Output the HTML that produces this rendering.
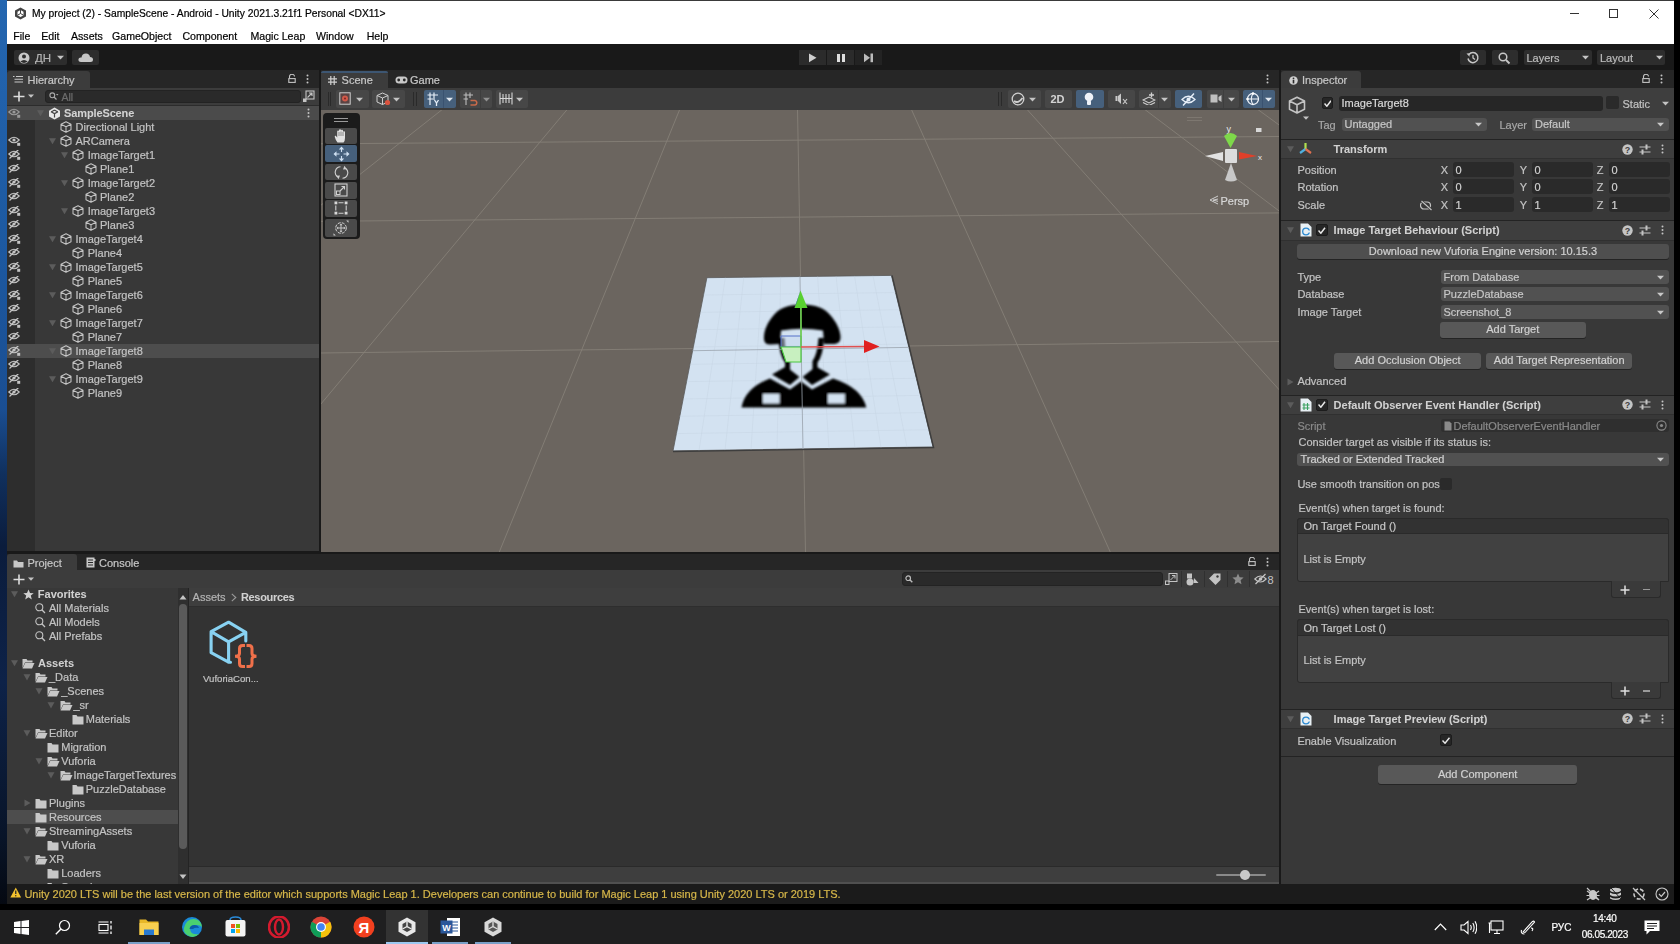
<!DOCTYPE html><html><head><meta charset="utf-8"><style>
*{margin:0;padding:0;box-sizing:border-box}
html,body{width:1680px;height:944px;overflow:hidden;background:#000}
body{position:relative;font-family:"Liberation Sans",sans-serif}
.a{position:absolute}
.t{position:absolute;white-space:nowrap;line-height:1;opacity:0.995;-webkit-text-stroke:0.2px currentColor}
</style></head><body>
<div class="a" style="left:0;top:0;width:7px;height:910px;background:linear-gradient(180deg,#2466b0 0%,#1d5aa2 25%,#1a4e92 45%,#10305e 52%,#0b1c3c 60%,#0d2248 75%,#081428 92%,#05080f 100%)"></div>
<div class="a" style="left:1674px;top:0px;width:6px;height:944px;background:#000;"></div>
<div class="a" style="left:7px;top:0px;width:1667px;height:44px;background:#ffffff;"></div>
<div class="a" style="left:7px;top:0px;width:1667px;height:1px;background:#3a3a3a;"></div>
<svg class="a" style="left:14px;top:7px;" width="13" height="13" viewBox="0 0 13 13"><path d="M6.5 0.5 L12 3.5 L12 9.5 L6.5 12.5 L1 9.5 L1 3.5 Z" fill="#444"/><path d="M6.5 3 L9.5 4.8 L9.5 8.2 L6.5 10 L3.5 8.2 L3.5 4.8 Z" fill="#fff"/><path d="M6.5 3 L6.5 6.5 L9.5 8.2 M6.5 6.5 L3.5 8.2" stroke="#444" stroke-width="1" fill="none"/></svg>
<div class="t" style="left:32px;top:6.5px;height:14px;line-height:14px;font-size:10.3px;color:#000;">My project (2) - SampleScene - Android - Unity 2021.3.21f1 Personal &lt;DX11&gt;</div>
<div class="a" style="left:1569.5px;top:12.5px;width:9.5px;height:1px;background:#333;"></div>
<div class="a" style="left:1608.5px;top:8.5px;width:9.5px;height:9.5px;border:1px solid #333"></div>
<svg class="a" style="left:1648.5px;top:8.5px;" width="10" height="10" viewBox="0 0 10 10"><path d="M0.5 0.5 L9.5 9.5 M9.5 0.5 L0.5 9.5" stroke="#333" stroke-width="1"/></svg>
<div class="t" style="left:13.3px;top:28.5px;height:14px;line-height:14px;font-size:10.6px;color:#000;">File</div>
<div class="t" style="left:41.2px;top:28.5px;height:14px;line-height:14px;font-size:10.6px;color:#000;">Edit</div>
<div class="t" style="left:71px;top:28.5px;height:14px;line-height:14px;font-size:10.6px;color:#000;">Assets</div>
<div class="t" style="left:112px;top:28.5px;height:14px;line-height:14px;font-size:10.6px;color:#000;">GameObject</div>
<div class="t" style="left:182.4px;top:28.5px;height:14px;line-height:14px;font-size:10.6px;color:#000;">Component</div>
<div class="t" style="left:250.5px;top:28.5px;height:14px;line-height:14px;font-size:10.6px;color:#000;">Magic Leap</div>
<div class="t" style="left:316px;top:28.5px;height:14px;line-height:14px;font-size:10.6px;color:#000;">Window</div>
<div class="t" style="left:366.7px;top:28.5px;height:14px;line-height:14px;font-size:10.6px;color:#000;">Help</div>
<div class="a" style="left:7px;top:44px;width:1667px;height:26px;background:#191919;"></div>
<div class="a" style="left:14px;top:50px;width:53px;height:15px;background:#2d2d2d;border-radius:2px"></div>
<svg class="a" style="left:18px;top:51.5px;" width="12" height="12" viewBox="0 0 12 12"><circle cx="6" cy="6" r="5.5" fill="#c8c8c8"/><circle cx="6" cy="4.6" r="2" fill="#2d2d2d"/><path d="M2.3 9.6 Q6 6.2 9.7 9.6 Q6 12.2 2.3 9.6Z" fill="#2d2d2d"/></svg>
<div class="t" style="left:35px;top:50.5px;height:14px;line-height:14px;font-size:11.5px;color:#b4b4b4;">ДН</div>
<svg class="a" style="left:55.5px;top:54.0px;" width="9.0" height="7.0" viewBox="0 0 9.0 7.0"><path d="M1 1.75 L8.0 1.75 L4.5 5.6000000000000005 Z" fill="#c4c4c4"/></svg>
<div class="a" style="left:72px;top:50px;width:27px;height:15px;background:#2d2d2d;border-radius:2px"></div>
<svg class="a" style="left:78px;top:52px;" width="16" height="11" viewBox="0 0 16 11"><path d="M3 10 Q0 10 0.5 7 Q1 5 3.5 5.5 Q4 1.5 8 1.5 Q11.5 1.5 12 5 Q15 5 15 7.5 Q15 10 12.5 10 Z" fill="#c8c8c8"/></svg>
<div class="a" style="left:799px;top:50px;width:27px;height:15px;background:#2b2b2b;"></div>
<div class="a" style="left:827px;top:50px;width:27px;height:15px;background:#2b2b2b;"></div>
<div class="a" style="left:855px;top:50px;width:27px;height:15px;background:#232323;"></div>
<svg class="a" style="left:809px;top:53px;" width="8" height="10" viewBox="0 0 8 10"><path d="M0 0.5 L7.5 4.8 L0 9.2Z" fill="#d0d0d0"/></svg>
<div class="a" style="left:837px;top:53.5px;width:3px;height:8.5px;background:#e0e0e0;"></div>
<div class="a" style="left:842px;top:53.5px;width:3px;height:8.5px;background:#e0e0e0;"></div>
<svg class="a" style="left:864px;top:53px;" width="10" height="10" viewBox="0 0 10 10"><path d="M0 0.5 L6 4.8 L0 9.2Z" fill="#bcbcbc"/><rect x="6.5" y="0.5" width="2.5" height="8.7" fill="#bcbcbc"/></svg>
<div class="a" style="left:1460px;top:50px;width:26px;height:15px;background:#2d2d2d;border-radius:2px"></div>
<svg class="a" style="left:1466px;top:51px;" width="14" height="13" viewBox="0 0 14 13"><path d="M3 3.5 A5 5 0 1 1 2 7.5" stroke="#c8c8c8" stroke-width="1.5" fill="none"/><path d="M0.5 2.5 L3.8 2.2 L3.5 5.8Z" fill="#c8c8c8"/><path d="M7 4 L7 7 L9 8.5" stroke="#c8c8c8" stroke-width="1.3" fill="none"/></svg>
<div class="a" style="left:1492px;top:50px;width:26px;height:15px;background:#2d2d2d;border-radius:2px"></div>
<svg class="a" style="left:1498px;top:51.5px;" width="14" height="13" viewBox="0 0 14 13"><circle cx="5" cy="5" r="3.8" stroke="#c8c8c8" stroke-width="1.5" fill="none"/><path d="M8 8 L11.5 11.5" stroke="#c8c8c8" stroke-width="1.8"/></svg>
<div class="a" style="left:1523.5px;top:50px;width:68px;height:15px;background:#2d2d2d;border-radius:2px"></div>
<div class="t" style="left:1526.4px;top:50.5px;height:14px;line-height:14px;font-size:11px;color:#bdbdbd;">Layers</div>
<svg class="a" style="left:1580.5px;top:54.0px;" width="9.0" height="7.0" viewBox="0 0 9.0 7.0"><path d="M1 1.75 L8.0 1.75 L4.5 5.6000000000000005 Z" fill="#c4c4c4"/></svg>
<div class="a" style="left:1597px;top:50px;width:68px;height:15px;background:#2d2d2d;border-radius:2px"></div>
<div class="t" style="left:1600px;top:50.5px;height:14px;line-height:14px;font-size:11px;color:#bdbdbd;">Layout</div>
<svg class="a" style="left:1654.5px;top:54.0px;" width="9.0" height="7.0" viewBox="0 0 9.0 7.0"><path d="M1 1.75 L8.0 1.75 L4.5 5.6000000000000005 Z" fill="#c4c4c4"/></svg>
<div class="a" style="left:7px;top:70px;width:311.5px;height:481.5px;background:#383838;"></div>
<div class="a" style="left:7px;top:70px;width:311.5px;height:18px;background:#262626;"></div>
<div class="a" style="left:7px;top:71px;width:83px;height:17px;background:#3c3c3c;border-radius:3px 3px 0 0"></div>
<div class="a" style="left:7px;top:88px;width:311.5px;height:17.5px;background:#3c3c3c;"></div>
<div class="a" style="left:7px;top:105.5px;width:311.5px;height:1px;background:#232323;"></div>
<div class="a" style="left:7px;top:106.5px;width:28px;height:445px;background:#2d2d2d;"></div>
<div class="a" style="left:318.5px;top:70px;width:2px;height:813.6px;background:#191919;"></div>
<div class="a" style="left:1279.3px;top:70px;width:1.5px;height:813.6px;background:#191919;"></div>
<div class="a" style="left:7px;top:551.4px;width:1272.3px;height:3px;background:#191919;"></div>
<div class="a" style="left:320.5px;top:70px;width:958.8px;height:18px;background:#262626;"></div>
<div class="a" style="left:320.5px;top:71px;width:67.5px;height:17px;background:#3c3c3c;border-radius:3px 3px 0 0"></div>
<div class="a" style="left:320.5px;top:88px;width:958.8px;height:21.5px;background:#3c3c3c;"></div>
<div class="a" style="left:320.5px;top:109.5px;width:958.8px;height:442px;background:#6b655f;"></div>
<div class="a" style="left:1280.8px;top:70px;width:393.2px;height:813.6px;background:#383838;"></div>
<div class="a" style="left:1280.8px;top:70px;width:393.2px;height:18px;background:#262626;"></div>
<div class="a" style="left:1281px;top:71px;width:80px;height:17px;background:#3c3c3c;border-radius:3px 3px 0 0"></div>
<div class="a" style="left:7px;top:554.4px;width:1272.3px;height:329.2px;background:#333333;"></div>
<div class="a" style="left:7px;top:554.4px;width:1272.3px;height:16px;background:#262626;"></div>
<div class="a" style="left:7px;top:554.4px;width:70px;height:16px;background:#3c3c3c;border-radius:3px 3px 0 0"></div>
<div class="a" style="left:7px;top:570.4px;width:1272.3px;height:17.6px;background:#3c3c3c;"></div>
<div class="a" style="left:7px;top:883.6px;width:1667px;height:20.4px;background:#1b1b1b;"></div>
<div class="a" style="left:0px;top:904px;width:1680px;height:6px;background:#000;"></div>
<div class="a" style="left:0px;top:910px;width:1680px;height:34px;background:#1f1f20;"></div>
<svg class="a" style="left:13px;top:76px;" width="10" height="7" viewBox="0 0 10 7"><path d="M0 0.5 H1.5 M3 0.5 H10 M1.5 3.2 H10 M1.5 6 H10" stroke="#c8c8c8" stroke-width="1.1"/></svg>
<div class="t" style="left:27.5px;top:73.2px;height:14px;line-height:14px;font-size:11px;color:#c8c8c8;">Hierarchy</div>
<svg class="a" style="left:288px;top:74px;" width="8" height="9" viewBox="0 0 8 9"><path d="M1.5 4 V2.5 A2.5 2.2 0 0 1 6.5 2.5" stroke="#c4c4c4" stroke-width="1.1" fill="none"/><rect x="0.8" y="4.6" width="6.4" height="3.8" stroke="#c4c4c4" stroke-width="1.1" fill="none"/></svg>
<svg class="a" style="left:305.5px;top:74px;" width="3" height="10" viewBox="0 0 3 10"><circle cx="1.5" cy="1.5" r="1" fill="#c4c4c4"/><circle cx="1.5" cy="5" r="1" fill="#c4c4c4"/><circle cx="1.5" cy="8.5" r="1" fill="#c4c4c4"/></svg>
<svg class="a" style="left:13px;top:91px;" width="12" height="11" viewBox="0 0 12 11"><path d="M6 0.5 V10.5 M0.5 5.5 H11.5" stroke="#dcdcdc" stroke-width="1.6"/></svg>
<svg class="a" style="left:26.5px;top:93px;" width="8" height="6" viewBox="0 0 8 6"><path d="M1 1.5 L7 1.5 L4 4.800000000000001 Z" fill="#c4c4c4"/></svg>
<div class="a" style="left:45px;top:89.5px;width:256px;height:13.5px;background:#2a2a2a;border-radius:3px;border:1px solid #232323"></div>
<svg class="a" style="left:49px;top:92px;" width="10" height="9" viewBox="0 0 10 9"><circle cx="3.3" cy="3.3" r="2.4" stroke="#aaa" stroke-width="1.1" fill="none"/><path d="M5 5 L7.5 7.5" stroke="#aaa" stroke-width="1.3"/><path d="M7 2 L9.5 2 L8.25 3.5Z" fill="#aaa"/></svg>
<div class="t" style="left:61.5px;top:89.5px;height:14px;line-height:14px;font-size:10.5px;color:#6e6e6e;">All</div>
<svg class="a" style="left:302px;top:90px;" width="13" height="13" viewBox="0 0 13 13"><rect x="4" y="1" width="8" height="8" stroke="#c4c4c4" stroke-width="1.1" fill="none"/><path d="M5.5 7.5 L10 3 M7 3 H10 V6" stroke="#c4c4c4" stroke-width="1.1" fill="none"/><rect x="1" y="8.5" width="3.5" height="3.5" fill="#c4c4c4"/></svg>
<div class="a" style="left:7px;top:105.5px;width:311.5px;height:14px;background:#4b4b4b;"></div>
<div class="a" style="left:7px;top:104.5px;width:311.5px;height:1.2px;background:#2c2c2c;"></div>
<svg class="a" style="left:8px;top:108px;" width="13" height="10" viewBox="0 0 13 10"><path d="M0.8 4 Q6 -1.5 11.2 4 Q6 9.5 0.8 4Z" stroke="#9a9a9a" stroke-width="1.1" fill="none"/><circle cx="6" cy="4" r="1.6" fill="#9a9a9a"/><rect x="9.2" y="6.8" width="3" height="3" fill="#9a9a9a"/></svg>
<svg class="a" style="left:37.0px;top:109.6px;" width="7" height="6.5" viewBox="0 0 7 6.5"><path d="M0 0.2 H7 L3.5 6.3Z" fill="#5c5c5c"/></svg>
<svg class="a" style="left:48px;top:106.5px;" width="13" height="13" viewBox="0 0 13 13"><path d="M6.5 0.6 L12 3.7 L12 9.5 L6.5 12.5 L1 9.5 L1 3.7Z" fill="#e8e8e8"/><path d="M6.5 3 L9.8 5 M6.5 3 L3.2 5 M6.5 6.6 L6.5 10.5 M6.5 6.6 L3 4.8 M6.5 6.6 L10 4.8" stroke="#464646" stroke-width="1.2"/></svg>
<div class="t" style="left:64px;top:105.5px;height:14px;line-height:14px;font-size:11px;color:#d4d4d4;font-weight:bold;-webkit-text-stroke:0.05px currentColor;letter-spacing:-0.12px">SampleScene</div>
<svg class="a" style="left:306.7px;top:107.8px;" width="3" height="10" viewBox="0 0 3 10"><circle cx="1.5" cy="1.5" r="1" fill="#c4c4c4"/><circle cx="1.5" cy="5" r="1" fill="#c4c4c4"/><circle cx="1.5" cy="8.5" r="1" fill="#c4c4c4"/></svg>
<svg class="a" style="left:60.0px;top:120.5px;" width="12" height="12" viewBox="0 0 12 12"><g transform="scale(1.0)"><path d="M6 0.8 L11 3.3 L11 8.8 L6 11.3 L1 8.8 L1 3.3 Z M1 3.3 L6 5.8 L11 3.3 M6 5.8 V11.3" stroke="#c4c4c4" stroke-width="1.05" fill="none" stroke-linejoin="round"/></g></svg>
<div class="t" style="left:75.5px;top:119.5px;height:14px;line-height:14px;font-size:11px;color:#c4c4c4;">Directional Light</div>
<svg class="a" style="left:8px;top:136.0px;" width="13" height="10" viewBox="0 0 13 10"><path d="M0.8 4 Q6 -1.5 11.2 4 Q6 9.5 0.8 4Z" stroke="#c4c4c4" stroke-width="1.1" fill="none"/><circle cx="6" cy="4" r="1.6" fill="#c4c4c4"/><rect x="9.2" y="6.8" width="3" height="3" fill="#c4c4c4"/></svg>
<svg class="a" style="left:49.0px;top:137.60000000000002px;" width="7" height="6.5" viewBox="0 0 7 6.5"><path d="M0 0.2 H7 L3.5 6.3Z" fill="#5c5c5c"/></svg>
<svg class="a" style="left:60.0px;top:134.5px;" width="12" height="12" viewBox="0 0 12 12"><g transform="scale(1.0)"><path d="M6 0.8 L11 3.3 L11 8.8 L6 11.3 L1 8.8 L1 3.3 Z M1 3.3 L6 5.8 L11 3.3 M6 5.8 V11.3" stroke="#c4c4c4" stroke-width="1.05" fill="none" stroke-linejoin="round"/></g></svg>
<div class="t" style="left:75.5px;top:133.5px;height:14px;line-height:14px;font-size:11px;color:#c4c4c4;">ARCamera</div>
<svg class="a" style="left:8px;top:150.0px;" width="13" height="10" viewBox="0 0 13 10"><path d="M0.8 4 Q6 -1.5 11.2 4 Q6 9.5 0.8 4Z" stroke="#c4c4c4" stroke-width="1.1" fill="none"/><circle cx="6" cy="4" r="1.6" fill="#c4c4c4"/><path d="M1.5 8.5 L10.5 -0.5" stroke="#c4c4c4" stroke-width="1.3"/><rect x="9.2" y="6.8" width="3" height="3" fill="#c4c4c4"/></svg>
<svg class="a" style="left:61.25px;top:151.60000000000002px;" width="7" height="6.5" viewBox="0 0 7 6.5"><path d="M0 0.2 H7 L3.5 6.3Z" fill="#5c5c5c"/></svg>
<svg class="a" style="left:72.25px;top:148.5px;" width="12" height="12" viewBox="0 0 12 12"><g transform="scale(1.0)"><path d="M6 0.8 L11 3.3 L11 8.8 L6 11.3 L1 8.8 L1 3.3 Z M1 3.3 L6 5.8 L11 3.3 M6 5.8 V11.3" stroke="#c4c4c4" stroke-width="1.05" fill="none" stroke-linejoin="round"/></g></svg>
<div class="t" style="left:87.75px;top:147.5px;height:14px;line-height:14px;font-size:11px;color:#c4c4c4;">ImageTarget1</div>
<svg class="a" style="left:8px;top:164.0px;" width="13" height="10" viewBox="0 0 13 10"><path d="M0.8 4 Q6 -1.5 11.2 4 Q6 9.5 0.8 4Z" stroke="#c4c4c4" stroke-width="1.1" fill="none"/><circle cx="6" cy="4" r="1.6" fill="#c4c4c4"/><path d="M1.5 8.5 L10.5 -0.5" stroke="#c4c4c4" stroke-width="1.3"/></svg>
<svg class="a" style="left:84.5px;top:162.5px;" width="12" height="12" viewBox="0 0 12 12"><g transform="scale(1.0)"><path d="M6 0.8 L11 3.3 L11 8.8 L6 11.3 L1 8.8 L1 3.3 Z M1 3.3 L6 5.8 L11 3.3 M6 5.8 V11.3" stroke="#c4c4c4" stroke-width="1.05" fill="none" stroke-linejoin="round"/></g></svg>
<div class="t" style="left:100.0px;top:161.5px;height:14px;line-height:14px;font-size:11px;color:#c4c4c4;">Plane1</div>
<svg class="a" style="left:8px;top:178.0px;" width="13" height="10" viewBox="0 0 13 10"><path d="M0.8 4 Q6 -1.5 11.2 4 Q6 9.5 0.8 4Z" stroke="#c4c4c4" stroke-width="1.1" fill="none"/><circle cx="6" cy="4" r="1.6" fill="#c4c4c4"/><path d="M1.5 8.5 L10.5 -0.5" stroke="#c4c4c4" stroke-width="1.3"/><rect x="9.2" y="6.8" width="3" height="3" fill="#c4c4c4"/></svg>
<svg class="a" style="left:61.25px;top:179.60000000000002px;" width="7" height="6.5" viewBox="0 0 7 6.5"><path d="M0 0.2 H7 L3.5 6.3Z" fill="#5c5c5c"/></svg>
<svg class="a" style="left:72.25px;top:176.5px;" width="12" height="12" viewBox="0 0 12 12"><g transform="scale(1.0)"><path d="M6 0.8 L11 3.3 L11 8.8 L6 11.3 L1 8.8 L1 3.3 Z M1 3.3 L6 5.8 L11 3.3 M6 5.8 V11.3" stroke="#c4c4c4" stroke-width="1.05" fill="none" stroke-linejoin="round"/></g></svg>
<div class="t" style="left:87.75px;top:175.5px;height:14px;line-height:14px;font-size:11px;color:#c4c4c4;">ImageTarget2</div>
<svg class="a" style="left:8px;top:192.0px;" width="13" height="10" viewBox="0 0 13 10"><path d="M0.8 4 Q6 -1.5 11.2 4 Q6 9.5 0.8 4Z" stroke="#c4c4c4" stroke-width="1.1" fill="none"/><circle cx="6" cy="4" r="1.6" fill="#c4c4c4"/><path d="M1.5 8.5 L10.5 -0.5" stroke="#c4c4c4" stroke-width="1.3"/></svg>
<svg class="a" style="left:84.5px;top:190.5px;" width="12" height="12" viewBox="0 0 12 12"><g transform="scale(1.0)"><path d="M6 0.8 L11 3.3 L11 8.8 L6 11.3 L1 8.8 L1 3.3 Z M1 3.3 L6 5.8 L11 3.3 M6 5.8 V11.3" stroke="#c4c4c4" stroke-width="1.05" fill="none" stroke-linejoin="round"/></g></svg>
<div class="t" style="left:100.0px;top:189.5px;height:14px;line-height:14px;font-size:11px;color:#c4c4c4;">Plane2</div>
<svg class="a" style="left:8px;top:206.0px;" width="13" height="10" viewBox="0 0 13 10"><path d="M0.8 4 Q6 -1.5 11.2 4 Q6 9.5 0.8 4Z" stroke="#c4c4c4" stroke-width="1.1" fill="none"/><circle cx="6" cy="4" r="1.6" fill="#c4c4c4"/><path d="M1.5 8.5 L10.5 -0.5" stroke="#c4c4c4" stroke-width="1.3"/><rect x="9.2" y="6.8" width="3" height="3" fill="#c4c4c4"/></svg>
<svg class="a" style="left:61.25px;top:207.60000000000002px;" width="7" height="6.5" viewBox="0 0 7 6.5"><path d="M0 0.2 H7 L3.5 6.3Z" fill="#5c5c5c"/></svg>
<svg class="a" style="left:72.25px;top:204.5px;" width="12" height="12" viewBox="0 0 12 12"><g transform="scale(1.0)"><path d="M6 0.8 L11 3.3 L11 8.8 L6 11.3 L1 8.8 L1 3.3 Z M1 3.3 L6 5.8 L11 3.3 M6 5.8 V11.3" stroke="#c4c4c4" stroke-width="1.05" fill="none" stroke-linejoin="round"/></g></svg>
<div class="t" style="left:87.75px;top:203.5px;height:14px;line-height:14px;font-size:11px;color:#c4c4c4;">ImageTarget3</div>
<svg class="a" style="left:8px;top:220.0px;" width="13" height="10" viewBox="0 0 13 10"><path d="M0.8 4 Q6 -1.5 11.2 4 Q6 9.5 0.8 4Z" stroke="#c4c4c4" stroke-width="1.1" fill="none"/><circle cx="6" cy="4" r="1.6" fill="#c4c4c4"/><path d="M1.5 8.5 L10.5 -0.5" stroke="#c4c4c4" stroke-width="1.3"/></svg>
<svg class="a" style="left:84.5px;top:218.5px;" width="12" height="12" viewBox="0 0 12 12"><g transform="scale(1.0)"><path d="M6 0.8 L11 3.3 L11 8.8 L6 11.3 L1 8.8 L1 3.3 Z M1 3.3 L6 5.8 L11 3.3 M6 5.8 V11.3" stroke="#c4c4c4" stroke-width="1.05" fill="none" stroke-linejoin="round"/></g></svg>
<div class="t" style="left:100.0px;top:217.5px;height:14px;line-height:14px;font-size:11px;color:#c4c4c4;">Plane3</div>
<svg class="a" style="left:8px;top:234.0px;" width="13" height="10" viewBox="0 0 13 10"><path d="M0.8 4 Q6 -1.5 11.2 4 Q6 9.5 0.8 4Z" stroke="#c4c4c4" stroke-width="1.1" fill="none"/><circle cx="6" cy="4" r="1.6" fill="#c4c4c4"/><path d="M1.5 8.5 L10.5 -0.5" stroke="#c4c4c4" stroke-width="1.3"/><rect x="9.2" y="6.8" width="3" height="3" fill="#c4c4c4"/></svg>
<svg class="a" style="left:49.0px;top:235.60000000000002px;" width="7" height="6.5" viewBox="0 0 7 6.5"><path d="M0 0.2 H7 L3.5 6.3Z" fill="#5c5c5c"/></svg>
<svg class="a" style="left:60.0px;top:232.5px;" width="12" height="12" viewBox="0 0 12 12"><g transform="scale(1.0)"><path d="M6 0.8 L11 3.3 L11 8.8 L6 11.3 L1 8.8 L1 3.3 Z M1 3.3 L6 5.8 L11 3.3 M6 5.8 V11.3" stroke="#c4c4c4" stroke-width="1.05" fill="none" stroke-linejoin="round"/></g></svg>
<div class="t" style="left:75.5px;top:231.5px;height:14px;line-height:14px;font-size:11px;color:#c4c4c4;">ImageTarget4</div>
<svg class="a" style="left:8px;top:248.0px;" width="13" height="10" viewBox="0 0 13 10"><path d="M0.8 4 Q6 -1.5 11.2 4 Q6 9.5 0.8 4Z" stroke="#c4c4c4" stroke-width="1.1" fill="none"/><circle cx="6" cy="4" r="1.6" fill="#c4c4c4"/><path d="M1.5 8.5 L10.5 -0.5" stroke="#c4c4c4" stroke-width="1.3"/></svg>
<svg class="a" style="left:72.25px;top:246.5px;" width="12" height="12" viewBox="0 0 12 12"><g transform="scale(1.0)"><path d="M6 0.8 L11 3.3 L11 8.8 L6 11.3 L1 8.8 L1 3.3 Z M1 3.3 L6 5.8 L11 3.3 M6 5.8 V11.3" stroke="#c4c4c4" stroke-width="1.05" fill="none" stroke-linejoin="round"/></g></svg>
<div class="t" style="left:87.75px;top:245.5px;height:14px;line-height:14px;font-size:11px;color:#c4c4c4;">Plane4</div>
<svg class="a" style="left:8px;top:262.0px;" width="13" height="10" viewBox="0 0 13 10"><path d="M0.8 4 Q6 -1.5 11.2 4 Q6 9.5 0.8 4Z" stroke="#c4c4c4" stroke-width="1.1" fill="none"/><circle cx="6" cy="4" r="1.6" fill="#c4c4c4"/><path d="M1.5 8.5 L10.5 -0.5" stroke="#c4c4c4" stroke-width="1.3"/><rect x="9.2" y="6.8" width="3" height="3" fill="#c4c4c4"/></svg>
<svg class="a" style="left:49.0px;top:263.6px;" width="7" height="6.5" viewBox="0 0 7 6.5"><path d="M0 0.2 H7 L3.5 6.3Z" fill="#5c5c5c"/></svg>
<svg class="a" style="left:60.0px;top:260.5px;" width="12" height="12" viewBox="0 0 12 12"><g transform="scale(1.0)"><path d="M6 0.8 L11 3.3 L11 8.8 L6 11.3 L1 8.8 L1 3.3 Z M1 3.3 L6 5.8 L11 3.3 M6 5.8 V11.3" stroke="#c4c4c4" stroke-width="1.05" fill="none" stroke-linejoin="round"/></g></svg>
<div class="t" style="left:75.5px;top:259.5px;height:14px;line-height:14px;font-size:11px;color:#c4c4c4;">ImageTarget5</div>
<svg class="a" style="left:8px;top:276.0px;" width="13" height="10" viewBox="0 0 13 10"><path d="M0.8 4 Q6 -1.5 11.2 4 Q6 9.5 0.8 4Z" stroke="#c4c4c4" stroke-width="1.1" fill="none"/><circle cx="6" cy="4" r="1.6" fill="#c4c4c4"/><path d="M1.5 8.5 L10.5 -0.5" stroke="#c4c4c4" stroke-width="1.3"/></svg>
<svg class="a" style="left:72.25px;top:274.5px;" width="12" height="12" viewBox="0 0 12 12"><g transform="scale(1.0)"><path d="M6 0.8 L11 3.3 L11 8.8 L6 11.3 L1 8.8 L1 3.3 Z M1 3.3 L6 5.8 L11 3.3 M6 5.8 V11.3" stroke="#c4c4c4" stroke-width="1.05" fill="none" stroke-linejoin="round"/></g></svg>
<div class="t" style="left:87.75px;top:273.5px;height:14px;line-height:14px;font-size:11px;color:#c4c4c4;">Plane5</div>
<svg class="a" style="left:8px;top:290.0px;" width="13" height="10" viewBox="0 0 13 10"><path d="M0.8 4 Q6 -1.5 11.2 4 Q6 9.5 0.8 4Z" stroke="#c4c4c4" stroke-width="1.1" fill="none"/><circle cx="6" cy="4" r="1.6" fill="#c4c4c4"/><path d="M1.5 8.5 L10.5 -0.5" stroke="#c4c4c4" stroke-width="1.3"/><rect x="9.2" y="6.8" width="3" height="3" fill="#c4c4c4"/></svg>
<svg class="a" style="left:49.0px;top:291.6px;" width="7" height="6.5" viewBox="0 0 7 6.5"><path d="M0 0.2 H7 L3.5 6.3Z" fill="#5c5c5c"/></svg>
<svg class="a" style="left:60.0px;top:288.5px;" width="12" height="12" viewBox="0 0 12 12"><g transform="scale(1.0)"><path d="M6 0.8 L11 3.3 L11 8.8 L6 11.3 L1 8.8 L1 3.3 Z M1 3.3 L6 5.8 L11 3.3 M6 5.8 V11.3" stroke="#c4c4c4" stroke-width="1.05" fill="none" stroke-linejoin="round"/></g></svg>
<div class="t" style="left:75.5px;top:287.5px;height:14px;line-height:14px;font-size:11px;color:#c4c4c4;">ImageTarget6</div>
<svg class="a" style="left:8px;top:304.0px;" width="13" height="10" viewBox="0 0 13 10"><path d="M0.8 4 Q6 -1.5 11.2 4 Q6 9.5 0.8 4Z" stroke="#c4c4c4" stroke-width="1.1" fill="none"/><circle cx="6" cy="4" r="1.6" fill="#c4c4c4"/><path d="M1.5 8.5 L10.5 -0.5" stroke="#c4c4c4" stroke-width="1.3"/></svg>
<svg class="a" style="left:72.25px;top:302.5px;" width="12" height="12" viewBox="0 0 12 12"><g transform="scale(1.0)"><path d="M6 0.8 L11 3.3 L11 8.8 L6 11.3 L1 8.8 L1 3.3 Z M1 3.3 L6 5.8 L11 3.3 M6 5.8 V11.3" stroke="#c4c4c4" stroke-width="1.05" fill="none" stroke-linejoin="round"/></g></svg>
<div class="t" style="left:87.75px;top:301.5px;height:14px;line-height:14px;font-size:11px;color:#c4c4c4;">Plane6</div>
<svg class="a" style="left:8px;top:318.0px;" width="13" height="10" viewBox="0 0 13 10"><path d="M0.8 4 Q6 -1.5 11.2 4 Q6 9.5 0.8 4Z" stroke="#c4c4c4" stroke-width="1.1" fill="none"/><circle cx="6" cy="4" r="1.6" fill="#c4c4c4"/><path d="M1.5 8.5 L10.5 -0.5" stroke="#c4c4c4" stroke-width="1.3"/><rect x="9.2" y="6.8" width="3" height="3" fill="#c4c4c4"/></svg>
<svg class="a" style="left:49.0px;top:319.6px;" width="7" height="6.5" viewBox="0 0 7 6.5"><path d="M0 0.2 H7 L3.5 6.3Z" fill="#5c5c5c"/></svg>
<svg class="a" style="left:60.0px;top:316.5px;" width="12" height="12" viewBox="0 0 12 12"><g transform="scale(1.0)"><path d="M6 0.8 L11 3.3 L11 8.8 L6 11.3 L1 8.8 L1 3.3 Z M1 3.3 L6 5.8 L11 3.3 M6 5.8 V11.3" stroke="#c4c4c4" stroke-width="1.05" fill="none" stroke-linejoin="round"/></g></svg>
<div class="t" style="left:75.5px;top:315.5px;height:14px;line-height:14px;font-size:11px;color:#c4c4c4;">ImageTarget7</div>
<svg class="a" style="left:8px;top:332.0px;" width="13" height="10" viewBox="0 0 13 10"><path d="M0.8 4 Q6 -1.5 11.2 4 Q6 9.5 0.8 4Z" stroke="#c4c4c4" stroke-width="1.1" fill="none"/><circle cx="6" cy="4" r="1.6" fill="#c4c4c4"/><path d="M1.5 8.5 L10.5 -0.5" stroke="#c4c4c4" stroke-width="1.3"/></svg>
<svg class="a" style="left:72.25px;top:330.5px;" width="12" height="12" viewBox="0 0 12 12"><g transform="scale(1.0)"><path d="M6 0.8 L11 3.3 L11 8.8 L6 11.3 L1 8.8 L1 3.3 Z M1 3.3 L6 5.8 L11 3.3 M6 5.8 V11.3" stroke="#c4c4c4" stroke-width="1.05" fill="none" stroke-linejoin="round"/></g></svg>
<div class="t" style="left:87.75px;top:329.5px;height:14px;line-height:14px;font-size:11px;color:#c4c4c4;">Plane7</div>
<div class="a" style="left:7px;top:343.5px;width:311.5px;height:14px;background:#4d4d4d;"></div>
<svg class="a" style="left:8px;top:346.0px;" width="13" height="10" viewBox="0 0 13 10"><path d="M0.8 4 Q6 -1.5 11.2 4 Q6 9.5 0.8 4Z" stroke="#c4c4c4" stroke-width="1.1" fill="none"/><circle cx="6" cy="4" r="1.6" fill="#c4c4c4"/><path d="M1.5 8.5 L10.5 -0.5" stroke="#c4c4c4" stroke-width="1.3"/><rect x="9.2" y="6.8" width="3" height="3" fill="#c4c4c4"/></svg>
<svg class="a" style="left:49.0px;top:347.6px;" width="7" height="6.5" viewBox="0 0 7 6.5"><path d="M0 0.2 H7 L3.5 6.3Z" fill="#5c5c5c"/></svg>
<svg class="a" style="left:60.0px;top:344.5px;" width="12" height="12" viewBox="0 0 12 12"><g transform="scale(1.0)"><path d="M6 0.8 L11 3.3 L11 8.8 L6 11.3 L1 8.8 L1 3.3 Z M1 3.3 L6 5.8 L11 3.3 M6 5.8 V11.3" stroke="#c4c4c4" stroke-width="1.05" fill="none" stroke-linejoin="round"/></g></svg>
<div class="t" style="left:75.5px;top:343.5px;height:14px;line-height:14px;font-size:11px;color:#c4c4c4;">ImageTarget8</div>
<svg class="a" style="left:8px;top:360.0px;" width="13" height="10" viewBox="0 0 13 10"><path d="M0.8 4 Q6 -1.5 11.2 4 Q6 9.5 0.8 4Z" stroke="#c4c4c4" stroke-width="1.1" fill="none"/><circle cx="6" cy="4" r="1.6" fill="#c4c4c4"/><path d="M1.5 8.5 L10.5 -0.5" stroke="#c4c4c4" stroke-width="1.3"/></svg>
<svg class="a" style="left:72.25px;top:358.5px;" width="12" height="12" viewBox="0 0 12 12"><g transform="scale(1.0)"><path d="M6 0.8 L11 3.3 L11 8.8 L6 11.3 L1 8.8 L1 3.3 Z M1 3.3 L6 5.8 L11 3.3 M6 5.8 V11.3" stroke="#c4c4c4" stroke-width="1.05" fill="none" stroke-linejoin="round"/></g></svg>
<div class="t" style="left:87.75px;top:357.5px;height:14px;line-height:14px;font-size:11px;color:#c4c4c4;">Plane8</div>
<svg class="a" style="left:8px;top:374.0px;" width="13" height="10" viewBox="0 0 13 10"><path d="M0.8 4 Q6 -1.5 11.2 4 Q6 9.5 0.8 4Z" stroke="#c4c4c4" stroke-width="1.1" fill="none"/><circle cx="6" cy="4" r="1.6" fill="#c4c4c4"/><path d="M1.5 8.5 L10.5 -0.5" stroke="#c4c4c4" stroke-width="1.3"/><rect x="9.2" y="6.8" width="3" height="3" fill="#c4c4c4"/></svg>
<svg class="a" style="left:49.0px;top:375.6px;" width="7" height="6.5" viewBox="0 0 7 6.5"><path d="M0 0.2 H7 L3.5 6.3Z" fill="#5c5c5c"/></svg>
<svg class="a" style="left:60.0px;top:372.5px;" width="12" height="12" viewBox="0 0 12 12"><g transform="scale(1.0)"><path d="M6 0.8 L11 3.3 L11 8.8 L6 11.3 L1 8.8 L1 3.3 Z M1 3.3 L6 5.8 L11 3.3 M6 5.8 V11.3" stroke="#c4c4c4" stroke-width="1.05" fill="none" stroke-linejoin="round"/></g></svg>
<div class="t" style="left:75.5px;top:371.5px;height:14px;line-height:14px;font-size:11px;color:#c4c4c4;">ImageTarget9</div>
<svg class="a" style="left:8px;top:388.0px;" width="13" height="10" viewBox="0 0 13 10"><path d="M0.8 4 Q6 -1.5 11.2 4 Q6 9.5 0.8 4Z" stroke="#c4c4c4" stroke-width="1.1" fill="none"/><circle cx="6" cy="4" r="1.6" fill="#c4c4c4"/><path d="M1.5 8.5 L10.5 -0.5" stroke="#c4c4c4" stroke-width="1.3"/></svg>
<svg class="a" style="left:72.25px;top:386.5px;" width="12" height="12" viewBox="0 0 12 12"><g transform="scale(1.0)"><path d="M6 0.8 L11 3.3 L11 8.8 L6 11.3 L1 8.8 L1 3.3 Z M1 3.3 L6 5.8 L11 3.3 M6 5.8 V11.3" stroke="#c4c4c4" stroke-width="1.05" fill="none" stroke-linejoin="round"/></g></svg>
<div class="t" style="left:87.75px;top:385.5px;height:14px;line-height:14px;font-size:11px;color:#c4c4c4;">Plane9</div>
<div class="a" style="left:320.5px;top:71px;width:67px;height:1.5px;background:#3d5672;border-radius:3px 3px 0 0"></div>
<svg class="a" style="left:327.5px;top:75.5px;" width="9" height="9" viewBox="0 0 9 9"><path d="M2.8 0 V9 M6.2 0 V9 M0 2.8 H9 M0 6.2 H9" stroke="#d0d0d0" stroke-width="1.2"/></svg>
<div class="t" style="left:341.6px;top:73.2px;height:14px;line-height:14px;font-size:11px;color:#c8c8c8;">Scene</div>
<svg class="a" style="left:395px;top:76px;" width="13" height="8" viewBox="0 0 13 8"><rect x="0.5" y="0.5" width="12" height="7" rx="3.5" fill="#c8c8c8"/><circle cx="3.7" cy="4" r="1.4" fill="#262626"/><circle cx="9.3" cy="4" r="1.4" fill="#262626"/></svg>
<div class="t" style="left:410px;top:73.2px;height:14px;line-height:14px;font-size:11px;color:#c8c8c8;">Game</div>
<svg class="a" style="left:1266px;top:74px;" width="3" height="10" viewBox="0 0 3 10"><circle cx="1.5" cy="1.5" r="1" fill="#c4c4c4"/><circle cx="1.5" cy="5" r="1" fill="#c4c4c4"/><circle cx="1.5" cy="8.5" r="1" fill="#c4c4c4"/></svg>
<div class="a" style="left:327.5px;top:92px;width:1px;height:14px;background:#2a2a2a;"></div>
<div class="a" style="left:330px;top:92px;width:1px;height:14px;background:#2a2a2a;"></div>
<div class="a" style="left:413px;top:92px;width:1px;height:14px;background:#2a2a2a;"></div>
<div class="a" style="left:416px;top:92px;width:1px;height:14px;background:#2a2a2a;"></div>
<div class="a" style="left:998px;top:92px;width:1px;height:14px;background:#2a2a2a;"></div>
<div class="a" style="left:1001px;top:92px;width:1px;height:14px;background:#2a2a2a;"></div>
<div class="a" style="left:336px;top:90px;width:32.5px;height:17.5px;background:#474747;border-radius:2px"></div>
<div class="a" style="left:372px;top:90px;width:33px;height:17.5px;background:#474747;border-radius:2px"></div>
<svg class="a" style="left:339px;top:92px;" width="12" height="13" viewBox="0 0 12 13"><rect x="0.8" y="0.8" width="10.4" height="11.4" stroke="#d0d0d0" stroke-width="1" fill="#5a4444"/><circle cx="6" cy="6.5" r="3" fill="#d05a4a"/><circle cx="6" cy="6.5" r="1" fill="#802020"/></svg>
<svg class="a" style="left:354.5px;top:95.5px;" width="9.0" height="7.0" viewBox="0 0 9.0 7.0"><path d="M1 1.75 L8.0 1.75 L4.5 5.6000000000000005 Z" fill="#c4c4c4"/></svg>
<svg class="a" style="left:376px;top:92px;" width="15" height="14" viewBox="0 0 15 14"><path d="M6.5 1 L12 3.5 L12 10 L6.5 12.5 L1 10 L1 3.5Z M1 3.5 L6.5 6 L12 3.5 M6.5 6 V12.5" stroke="#cfcfcf" stroke-width="1" fill="none"/><circle cx="11.5" cy="10.5" r="2.6" fill="#d9533f"/></svg>
<svg class="a" style="left:392.0px;top:95.5px;" width="9.0" height="7.0" viewBox="0 0 9.0 7.0"><path d="M1 1.75 L8.0 1.75 L4.5 5.6000000000000005 Z" fill="#c4c4c4"/></svg>
<div class="a" style="left:424px;top:90px;width:32px;height:17.5px;background:#46607c;border-radius:2px"></div>
<div class="a" style="left:442.5px;top:90px;width:1px;height:17.5px;background:#3a5270;"></div>
<svg class="a" style="left:427px;top:91.5px;" width="14" height="14" viewBox="0 0 14 14"><path d="M3 0.5 V13 M7 0.5 V8 M0.5 3 H11 M0.5 7 H6" stroke="#e6eef8" stroke-width="1.2"/><path d="M7.5 8 L9.5 11 L11.5 8 M9.5 11 V14" stroke="#e6eef8" stroke-width="1.3" fill="none"/></svg>
<svg class="a" style="left:445.0px;top:95.5px;" width="9.0" height="7.0" viewBox="0 0 9.0 7.0"><path d="M1 1.75 L8.0 1.75 L4.5 5.6000000000000005 Z" fill="#e0e6ee"/></svg>
<div class="a" style="left:460px;top:90px;width:32px;height:17.5px;background:#474747;border-radius:2px"></div>
<div class="a" style="left:479.5px;top:90px;width:1px;height:17.5px;background:#3e3e3e;"></div>
<svg class="a" style="left:463px;top:91.5px;" width="15" height="14" viewBox="0 0 15 14"><path d="M3 0.5 V13 M7 0.5 V6 M0.5 3 H10 M0.5 7 H5" stroke="#bdbdbd" stroke-width="1.1"/><path d="M7.5 8.5 H12 A2.3 2.3 0 0 1 12 13 H7.5" stroke="#c86a4a" stroke-width="1.6" fill="none"/></svg>
<svg class="a" style="left:481.5px;top:95.5px;" width="9.0" height="7.0" viewBox="0 0 9.0 7.0"><path d="M1 1.75 L8.0 1.75 L4.5 5.6000000000000005 Z" fill="#909090"/></svg>
<div class="a" style="left:496px;top:90px;width:32px;height:17.5px;background:#474747;border-radius:2px"></div>
<svg class="a" style="left:499px;top:92px;" width="14" height="13" viewBox="0 0 14 13"><path d="M1 0.5 V12.5 M13 0.5 V12.5 M4 2 V11 M7 2 V11 M10 2 V11 M1 6.5 H13" stroke="#d8d8d8" stroke-width="1.1"/></svg>
<svg class="a" style="left:514.5px;top:95.5px;" width="9.0" height="7.0" viewBox="0 0 9.0 7.0"><path d="M1 1.75 L8.0 1.75 L4.5 5.6000000000000005 Z" fill="#c4c4c4"/></svg>
<div class="a" style="left:1008px;top:90px;width:33px;height:17.5px;background:#474747;border-radius:2px"></div>
<svg class="a" style="left:1011px;top:92px;" width="14" height="14" viewBox="0 0 14 14"><circle cx="7" cy="7" r="5.8" stroke="#d0d0d0" stroke-width="1.3" fill="none"/><path d="M3 9 Q7 12 11.5 6" stroke="#d0d0d0" stroke-width="1.8" fill="none"/></svg>
<svg class="a" style="left:1027.5px;top:95.5px;" width="9.0" height="7.0" viewBox="0 0 9.0 7.0"><path d="M1 1.75 L8.0 1.75 L4.5 5.6000000000000005 Z" fill="#c4c4c4"/></svg>
<div class="a" style="left:1044.5px;top:90px;width:27.5px;height:17.5px;background:#474747;border-radius:2px"></div>
<div class="t" style="left:1050.5px;top:92.0px;height:14px;line-height:14px;font-size:11px;color:#d4d4d4;font-weight:bold;-webkit-text-stroke:0.05px currentColor">2D</div>
<div class="a" style="left:1075.5px;top:90px;width:28.5px;height:17.5px;background:#46607c;border-radius:2px"></div>
<svg class="a" style="left:1084px;top:92px;" width="10" height="14" viewBox="0 0 10 14"><circle cx="5" cy="5" r="4.3" fill="#eef2f8"/><rect x="3" y="8.5" width="4" height="4.5" rx="1" fill="#eef2f8"/></svg>
<div class="a" style="left:1107.5px;top:90px;width:27.5px;height:17.5px;background:#474747;border-radius:2px"></div>
<svg class="a" style="left:1115px;top:93px;" width="14" height="12" viewBox="0 0 14 12"><rect x="0.5" y="3" width="2" height="5" fill="#c8c8c8"/><path d="M3 3 L6 0.5 V11 L3 8Z" fill="#c8c8c8"/><path d="M8 6 L12 11 M12 6 L8 11" stroke="#c8c8c8" stroke-width="1.2"/></svg>
<div class="a" style="left:1139px;top:90px;width:32.299999999999955px;height:17.5px;background:#474747;border-radius:2px"></div>
<div class="a" style="left:1157.5px;top:90px;width:1px;height:17.5px;background:#3e3e3e;"></div>
<svg class="a" style="left:1142px;top:92px;" width="14" height="13" viewBox="0 0 14 13"><path d="M1 8 L7 5 L13 8 L7 11Z" stroke="#d0d0d0" stroke-width="1.1" fill="none"/><path d="M1 10.5 L7 13.5 L13 10.5" stroke="#d0d0d0" stroke-width="1.1" fill="none"/><path d="M9.5 0.5 V5.5 M7 3 H12" stroke="#d0d0d0" stroke-width="1.3"/></svg>
<svg class="a" style="left:1160.0px;top:95.5px;" width="9.0" height="7.0" viewBox="0 0 9.0 7.0"><path d="M1 1.75 L8.0 1.75 L4.5 5.6000000000000005 Z" fill="#c4c4c4"/></svg>
<div class="a" style="left:1174.7px;top:90px;width:27.59999999999991px;height:17.5px;background:#46607c;border-radius:2px"></div>
<svg class="a" style="left:1181px;top:92.5px;" width="15" height="13" viewBox="0 0 15 13"><path d="M1 6.5 Q7.5 0 14 6.5 Q7.5 13 1 6.5Z" stroke="#e6eef8" stroke-width="1.3" fill="none"/><circle cx="7.5" cy="6.5" r="2" fill="#e6eef8"/><path d="M2 12.5 L13 0.5" stroke="#e6eef8" stroke-width="1.4"/></svg>
<div class="a" style="left:1206.6px;top:90px;width:32.80000000000018px;height:17.5px;background:#474747;border-radius:2px"></div>
<div class="a" style="left:1223px;top:90px;width:1px;height:17.5px;background:#3e3e3e;"></div>
<svg class="a" style="left:1210px;top:94px;" width="12" height="9" viewBox="0 0 12 9"><rect x="0.5" y="0.5" width="7" height="8" fill="#c0c0c0"/><path d="M8.5 3 L11.5 1 V8 L8.5 6Z" fill="#c0c0c0"/></svg>
<svg class="a" style="left:1226.5px;top:95.5px;" width="9.0" height="7.0" viewBox="0 0 9.0 7.0"><path d="M1 1.75 L8.0 1.75 L4.5 5.6000000000000005 Z" fill="#c4c4c4"/></svg>
<div class="a" style="left:1242.9px;top:90px;width:31.899999999999864px;height:17.5px;background:#46607c;border-radius:2px"></div>
<div class="a" style="left:1261.5px;top:90px;width:1px;height:17.5px;background:#3a5270;"></div>
<svg class="a" style="left:1245.5px;top:91.5px;" width="14" height="14" viewBox="0 0 14 14"><circle cx="7" cy="7" r="5.5" stroke="#eef2f8" stroke-width="1.3" fill="none"/><path d="M1.5 7 H12.5 M7 1.5 Q3.5 7 7 12.5" stroke="#eef2f8" stroke-width="1.1" fill="none"/><circle cx="7" cy="1.5" r="1.3" fill="#fff"/><circle cx="1.5" cy="7" r="1.3" fill="#fff"/></svg>
<svg class="a" style="left:1263.5px;top:95.5px;" width="9.0" height="7.0" viewBox="0 0 9.0 7.0"><path d="M1 1.75 L8.0 1.75 L4.5 5.6000000000000005 Z" fill="#e0e6ee"/></svg>
<svg class="a" style="left:320.5px;top:109.5px;overflow:hidden" width="958.8" height="442" viewBox="0 0 958.8 442"><g stroke="#8a847c" stroke-width="0.9" opacity="0.85"><line x1="122.5" y1="-1.5" x2="-0.5" y2="95.5"/><line x1="247.0" y1="-1.5" x2="-0.5" y2="294.5"/><line x1="359.1" y1="-1.5" x2="178.10000000000002" y2="442.5"/><line x1="476.5" y1="-1.5" x2="484.5" y2="442.5"/><line x1="590.0" y1="-1.5" x2="789.5" y2="442.5"/><line x1="705.2" y1="-1.5" x2="958.8" y2="280.5"/><line x1="822.5" y1="-1.5" x2="958.8" y2="101.5"/><line x1="935.5" y1="-1.5" x2="958.8" y2="15.5"/><line x1="0.0" y1="33.80000000000001" x2="958.8" y2="26.5"/><line x1="0.0" y1="111.30000000000001" x2="958.8" y2="102.9"/><line x1="0.0" y1="243.0" x2="958.8" y2="231.5"/></g></svg>
<svg class="a" style="left:600px;top:250px;overflow:visible" width="400" height="220" viewBox="0 0 400 220"><polygon points="106.89999999999998,27.69999999999999 291.4,25.399999999999977 333,196.89999999999998 73,200.89999999999998" fill="#d3e2f1" stroke="#5a5a5a" stroke-width="0.8"/><polyline points="73,201.49999999999997 333.6,197.49999999999997 292.0,25.399999999999977" fill="none" stroke="#3e3e3e" stroke-width="1.4"/><g stroke="#bccad8" stroke-width="0.5" opacity="0.55"><line x1="125.35000000000002" y1="27.46999999999997" x2="99.0" y2="200.5"/><line x1="103.50999999999999" y1="45.01999999999998" x2="295.55999999999995" y2="42.549999999999955"/><line x1="143.79999999999995" y1="27.24000000000001" x2="125.0" y2="200.09999999999997"/><line x1="100.12" y1="62.339999999999975" x2="299.72" y2="59.69999999999999"/><line x1="162.25" y1="27.00999999999999" x2="151.0" y2="199.7"/><line x1="96.73000000000002" y1="79.65999999999997" x2="303.88" y2="76.84999999999997"/><line x1="180.69999999999993" y1="26.779999999999973" x2="177.0" y2="199.29999999999995"/><line x1="93.34000000000003" y1="96.98000000000002" x2="308.03999999999996" y2="94.0"/><line x1="199.14999999999998" y1="26.549999999999955" x2="203.0" y2="198.89999999999998"/><line x1="89.95000000000005" y1="114.29999999999995" x2="312.20000000000005" y2="111.14999999999998"/><line x1="217.60000000000002" y1="26.319999999999993" x2="229.0" y2="198.5"/><line x1="86.55999999999995" y1="131.62" x2="316.36" y2="128.29999999999995"/><line x1="236.04999999999995" y1="26.089999999999975" x2="255.0" y2="198.09999999999997"/><line x1="83.16999999999996" y1="148.93999999999994" x2="320.52" y2="145.45"/><line x1="254.5" y1="25.859999999999957" x2="281.0" y2="197.7"/><line x1="79.77999999999997" y1="166.26" x2="324.67999999999995" y2="162.60000000000002"/><line x1="272.95000000000005" y1="25.629999999999995" x2="307.0" y2="197.29999999999995"/><line x1="76.38999999999999" y1="183.57999999999998" x2="328.84000000000003" y2="179.75"/></g><g filter="url(#bl)"><path d="M202 54.5 C215 54.5 225 58 231 66 C236 72 240 79 240.5 86 C241 92 238 94 233 94 L224 94 Q223.5 86 223 80.5 Q202 77 181 80.5 Q180.5 86 180 94 L170 94.5 C165 94.5 163.5 91 164 86 C164.5 79 168 72 173 66 C179 58 189 54.5 202 54.5 Z" fill="#050505"/><path d="M178.5 88 Q179.5 106 185 112.5 L185 120 L190 120 L190 111 Q185 104 184.5 88 Z" fill="#050505"/><path d="M224 88 Q223 106 217.5 112.5 L217.5 120 L212.5 120 L212.5 111 Q217.5 104 218.5 88 Z" fill="#050505"/><path d="M172 124.5 L186 116.5 L199.5 127 L190 135 Z" fill="#050505"/><path d="M230 124.5 L216 116.5 L202.5 127 L212 135 Z" fill="#050505"/><path d="M141.5 157.5 Q145 138 170 128.5 L190 139.5 L201 131.5 L212 139.5 L233 128.5 Q262 138 266.3 157.5 Z" fill="#050505"/><rect x="163" y="144" width="16.6" height="9.5" fill="#d3e2f1"/><rect x="228" y="144" width="16.8" height="9.5" fill="#d3e2f1"/></g><defs><filter id="bl"><feGaussianBlur stdDeviation="1.1"/></filter></defs><clipPath id="pc"><polygon points="106.89999999999998,27.69999999999999 291.4,25.399999999999977 333,196.89999999999998 73,200.89999999999998"/></clipPath><g clip-path="url(#pc)"><line x1="200" y1="26" x2="203" y2="200" stroke="#9aa3ad" stroke-width="0.8"/><line x1="73" y1="101" x2="333" y2="97" stroke="#9aa3ad" stroke-width="0.8"/></g><path d="M181 86 H201 V97 H181Z" stroke="#5470c8" stroke-width="1" fill="#c8d8f0" fill-opacity="0.5"/><path d="M181 97 H201 V112 H186Z" stroke="#4ac840" stroke-width="1.2" fill="#c8f0c0"/><line x1="201" y1="58" x2="201" y2="97" stroke="#6ad04a" stroke-width="1.6"/><path d="M200.5 40.5 L207.5 58 L194.5 58Z" fill="#58d030"/><path d="M200.5 40.5 L197 52 L194.5 58Z" fill="#2a60b0"/><line x1="201" y1="97" x2="264" y2="96.5" stroke="#e05050" stroke-width="1.3"/><path d="M279.5 96.5 L264 90 L264 103Z" fill="#e02020"/></svg>
<div class="a" style="left:322.5px;top:112.8px;width:37px;height:126.5px;background:#1b1b1b;border-radius:4px"></div>
<div class="a" style="left:334px;top:117.5px;width:14px;height:1px;background:#9a9a9a;"></div>
<div class="a" style="left:334px;top:120.5px;width:14px;height:1px;background:#9a9a9a;"></div>
<div class="a" style="left:325px;top:127.75px;width:32.25px;height:15.75px;background:#4a4a4a;border-radius:2px"></div>
<div class="a" style="left:325px;top:145.25px;width:32.25px;height:16.75px;background:#46607c;border-radius:2px"></div>
<div class="a" style="left:325px;top:164px;width:32.25px;height:16.25px;background:#4a4a4a;border-radius:2px"></div>
<div class="a" style="left:325px;top:182px;width:32.25px;height:16.5px;background:#4a4a4a;border-radius:2px"></div>
<div class="a" style="left:325px;top:200px;width:32.25px;height:16.5px;background:#4a4a4a;border-radius:2px"></div>
<div class="a" style="left:325px;top:219px;width:32.25px;height:17.5px;background:#4a4a4a;border-radius:2px"></div>
<svg class="a" style="left:334px;top:128.5px;" width="14" height="14" viewBox="0 0 14 14"><path d="M3.5 13.5 Q1.5 11 0.8 8 Q0.5 6.5 1.8 6.8 L3.2 8.5 V2.5 Q3.2 1.5 4.1 1.5 Q5 1.5 5 2.5 V6.5 V1.2 Q5 0.3 6 0.3 Q7 0.3 7 1.2 V6.5 V1.7 Q7 0.8 8 0.8 Q9 0.8 9 1.7 V6.8 V3 Q9 2.2 10 2.2 Q11 2.2 11 3 V9 Q11 12 9.5 13.5Z" fill="#e2e2e2"/><path d="M5 3 V7 M7 2.5 V7 M9 3 V7" stroke="#4a4a4a" stroke-width="0.6"/></svg>
<svg class="a" style="left:333px;top:146px;" width="17" height="16" viewBox="0 0 17 16"><path d="M8.5 3 V6 M8.5 10 V13 M3 8 H6.5 M10.5 8 H14" stroke="#cfe0f2" stroke-width="1.1"/><path d="M8.5 0.5 L5.8 3.5 H11.2Z M8.5 15.5 L5.8 12.5 H11.2Z M0.5 8 L3.5 5.3 V10.7Z M16.5 8 L13.5 5.3 V10.7Z" fill="#cfe0f2"/></svg>
<svg class="a" style="left:334px;top:165px;" width="15" height="15" viewBox="0 0 15 15"><path d="M11.8 3.5 A5.5 5.5 0 0 1 8.5 13.2 M3.2 11.5 A5.5 5.5 0 0 1 6.5 1.8" stroke="#d0d0d0" stroke-width="1.1" fill="none"/><path d="M10.5 0.8 L12.8 4.3 L9 4.6Z M4.5 14.2 L2.2 10.7 L6 10.4Z" fill="#d0d0d0"/></svg>
<svg class="a" style="left:334px;top:183px;" width="14" height="14" viewBox="0 0 14 14"><rect x="1" y="1" width="12" height="12" stroke="#d0d0d0" stroke-width="1.1" fill="none"/><rect x="2.5" y="8" width="3.5" height="3.5" stroke="#d0d0d0" stroke-width="1" fill="none"/><path d="M6 8 L10.5 3.5 M7.5 3.5 H10.5 V6.5" stroke="#d0d0d0" stroke-width="1.1" fill="none"/></svg>
<svg class="a" style="left:334px;top:201px;" width="14" height="14" viewBox="0 0 14 14"><path d="M4.5 1.8 H9.5 M4.5 12.2 H9.5 M1.8 4.5 V9.5 M12.2 4.5 V9.5" stroke="#d0d0d0" stroke-width="1.1"/><rect x="0.5" y="0.5" width="2.8" height="2.8" fill="#d8d8d8"/><rect x="10.7" y="0.5" width="2.8" height="2.8" fill="#d8d8d8"/><rect x="0.5" y="10.7" width="2.8" height="2.8" fill="#d8d8d8"/><rect x="10.7" y="10.7" width="2.8" height="2.8" fill="#d8d8d8"/></svg>
<svg class="a" style="left:333px;top:219.5px;" width="16" height="16" viewBox="0 0 16 16"><circle cx="8" cy="8" r="5.3" stroke="#d0d0d0" stroke-width="1" fill="none" stroke-dasharray="3 1.2"/><path d="M8 4.5 V11.5 M4.5 8 H11.5" stroke="#d0d0d0" stroke-width="0.9"/><path d="M8 3.5 L6.5 5.2 H9.5Z M8 12.5 L6.5 10.8 H9.5Z M3.5 8 L5.2 6.5 V9.5Z M12.5 8 L10.8 6.5 V9.5Z" fill="#d0d0d0"/><path d="M13.2 0.5 L15.5 0.5 L15.5 2.8Z M2.8 15.5 L0.5 15.5 L0.5 13.2Z" fill="#d0d0d0"/></svg>
<div class="a" style="left:1187px;top:117px;width:15px;height:1px;background:#7d7770;"></div>
<div class="a" style="left:1187px;top:119.5px;width:15px;height:1px;background:#7d7770;"></div>
<svg class="a" style="left:1200px;top:120px;" width="70" height="70" viewBox="0 0 70 70"><text x="26.5" y="12" font-family="Liberation Sans" font-size="9" fill="#e8e8e8">y</text><path d="M30.5 28 L24 16 Q30.5 10 37 16Z" fill="#7ed84a"/><path d="M5 36 L23 32 L23 41Z" fill="#e2e2e2"/><path d="M57 36 L39 32 L39 39.5Z" fill="#e0402a"/><text x="58" y="40" font-family="Liberation Sans" font-size="8" fill="#e8e8e8">x</text><rect x="25" y="29" width="12" height="14" rx="1" fill="#dcdcdc"/><path d="M31 43 L25 60 Q31 63 37 60Z" fill="#c8c8c8"/><rect x="56" y="8" width="5.5" height="4" fill="#d8d8d8"/></svg>
<svg class="a" style="left:1209px;top:195px;" width="10" height="10" viewBox="0 0 10 10"><path d="M9 1 L1 5 L9 9 M9 4 L4 5.2 L9 6.3" stroke="#d0d0d0" stroke-width="1" fill="none"/></svg>
<div class="t" style="left:1220.5px;top:193.5px;height:14px;line-height:14px;font-size:11px;color:#d8d8d8;">Persp</div>
<svg class="a" style="left:1288.6px;top:75.5px;" width="9" height="9" viewBox="0 0 9 9"><circle cx="4.5" cy="4.5" r="4.3" fill="#d0d0d0"/><rect x="3.7" y="3.8" width="1.6" height="3.6" fill="#2a2a2a"/><circle cx="4.5" cy="2.3" r="0.9" fill="#2a2a2a"/></svg>
<div class="t" style="left:1302px;top:73.2px;height:14px;line-height:14px;font-size:11px;color:#c8c8c8;">Inspector</div>
<svg class="a" style="left:1642px;top:74px;" width="8" height="9" viewBox="0 0 8 9"><path d="M1.5 4 V2.5 A2.5 2.2 0 0 1 6.5 2.5" stroke="#c4c4c4" stroke-width="1.1" fill="none"/><rect x="0.8" y="4.6" width="6.4" height="3.8" stroke="#c4c4c4" stroke-width="1.1" fill="none"/></svg>
<svg class="a" style="left:1659.5px;top:74px;" width="3" height="10" viewBox="0 0 3 10"><circle cx="1.5" cy="1.5" r="1" fill="#c4c4c4"/><circle cx="1.5" cy="5" r="1" fill="#c4c4c4"/><circle cx="1.5" cy="8.5" r="1" fill="#c4c4c4"/></svg>
<div class="a" style="left:1280.8px;top:88px;width:393.2px;height:51px;background:#3e3e3e;"></div>
<div class="a" style="left:1280.8px;top:139px;width:393.2px;height:1px;background:#232323;"></div>
<svg class="a" style="left:1287.5px;top:96px;" width="18" height="18" viewBox="0 0 18 18"><g transform="scale(1.5)"><path d="M6 0.8 L11 3.3 L11 8.8 L6 11.3 L1 8.8 L1 3.3 Z M1 3.3 L6 5.8 L11 3.3 M6 5.8 V11.3" stroke="#c4c4c4" stroke-width="1.05" fill="none" stroke-linejoin="round"/></g></svg>
<svg class="a" style="left:1302px;top:114.5px;" width="8" height="6" viewBox="0 0 8 6"><path d="M1 1.5 L7 1.5 L4 4.800000000000001 Z" fill="#c4c4c4"/></svg>
<div class="a" style="left:1321.5px;top:97px;width:11.5px;height:12px;background:#262626;border-radius:2px;border:1px solid #1c1c1c"></div>
<svg class="a" style="left:1323.5px;top:99.5px;" width="7.5" height="7" viewBox="0 0 7.5 7"><path d="M0.5 3.5 L2.85 6.2 L7.0 0.8" stroke="#e8e8e8" stroke-width="1.5" fill="none"/></svg>
<div class="a" style="left:1339px;top:95.5px;width:264px;height:15px;background:#262626;border-radius:3px"></div>
<div class="t" style="left:1341.5px;top:96.0px;height:14px;line-height:14px;font-size:11px;color:#dadada;">ImageTarget8</div>
<div class="a" style="left:1606px;top:96px;width:13px;height:13px;background:#2a2a2a;border-radius:2px"></div>
<div class="t" style="left:1622.5px;top:96.5px;height:14px;line-height:14px;font-size:11px;color:#c4c4c4;">Static</div>
<svg class="a" style="left:1660.5px;top:99.5px;" width="9.0" height="7.0" viewBox="0 0 9.0 7.0"><path d="M1 1.75 L8.0 1.75 L4.5 5.6000000000000005 Z" fill="#c4c4c4"/></svg>
<div class="t" style="left:1318px;top:117.5px;height:14px;line-height:14px;font-size:11px;color:#a8a8a8;">Tag</div>
<div class="a" style="left:1341.5px;top:117.8px;width:145.5px;height:13.200000000000003px;background:#515151;border-radius:3px"></div>
<div class="t" style="left:1344.5px;top:117.4px;height:14px;line-height:14px;font-size:11px;color:#c8c8c8;">Untagged</div>
<svg class="a" style="left:1474.0px;top:121.4px;" width="9.0" height="7.0" viewBox="0 0 9.0 7.0"><path d="M1 1.75 L8.0 1.75 L4.5 5.6000000000000005 Z" fill="#c8c8c8"/></svg>
<div class="t" style="left:1499.5px;top:117.5px;height:14px;line-height:14px;font-size:11px;color:#a8a8a8;">Layer</div>
<div class="a" style="left:1532px;top:117.8px;width:136.70000000000005px;height:13.200000000000003px;background:#515151;border-radius:3px"></div>
<div class="t" style="left:1535px;top:117.4px;height:14px;line-height:14px;font-size:11px;color:#c8c8c8;">Default</div>
<svg class="a" style="left:1655.7px;top:121.4px;" width="9.0" height="7.0" viewBox="0 0 9.0 7.0"><path d="M1 1.75 L8.0 1.75 L4.5 5.6000000000000005 Z" fill="#c8c8c8"/></svg>
<div class="a" style="left:1280.8px;top:140px;width:393.2px;height:18px;background:#3e3e3e;"></div>
<div class="a" style="left:1280.8px;top:158px;width:393.2px;height:1px;background:#303030;"></div>
<svg class="a" style="left:1287.0px;top:146.10000000000002px;" width="7" height="6.5" viewBox="0 0 7 6.5"><path d="M0 0.2 H7 L3.5 6.3Z" fill="#5c5c5c"/></svg>
<svg class="a" style="left:1298px;top:142.0px;" width="15" height="14" viewBox="0 0 15 14"><path d="M7.5 1 V7" stroke="#b0e050" stroke-width="2.2"/><path d="M7.5 7 L2 11" stroke="#50b0e0" stroke-width="2.2"/><path d="M7.5 7 L13 11" stroke="#e07050" stroke-width="2.2"/></svg>
<div class="t" style="left:1333.6px;top:142.0px;height:14px;line-height:14px;font-size:11px;color:#d2d2d2;font-weight:bold;-webkit-text-stroke:0.05px currentColor">Transform</div>
<svg class="a" style="left:1622px;top:143.5px;" width="11" height="11" viewBox="0 0 11 11"><circle cx="5.5" cy="5.5" r="5.2" fill="#c4c4c4"/><text x="5.5" y="8.8" text-anchor="middle" font-family="Liberation Sans" font-weight="bold" font-size="9" fill="#3e3e3e">?</text></svg>
<svg class="a" style="left:1639px;top:143.5px;" width="12" height="11" viewBox="0 0 12 11"><path d="M0.5 3 H11.5 M0.5 8 H11.5" stroke="#c4c4c4" stroke-width="1.2"/><rect x="6.5" y="0.5" width="2" height="5" fill="#c4c4c4"/><rect x="2.5" y="5.5" width="2" height="5" fill="#c4c4c4"/></svg>
<svg class="a" style="left:1660.5px;top:144.0px;" width="3" height="10" viewBox="0 0 3 10"><circle cx="1.5" cy="1.5" r="1" fill="#c4c4c4"/><circle cx="1.5" cy="5" r="1" fill="#c4c4c4"/><circle cx="1.5" cy="8.5" r="1" fill="#c4c4c4"/></svg>
<div class="t" style="left:1297.5px;top:162.60000000000002px;height:14px;line-height:14px;font-size:11px;color:#c4c4c4;">Position</div>
<div class="t" style="left:1440.8px;top:162.60000000000002px;height:14px;line-height:14px;font-size:11px;color:#c4c4c4;">X</div>
<div class="a" style="left:1453px;top:161.8px;width:61px;height:15px;background:#2a2a2a;border-radius:3px"></div>
<div class="t" style="left:1455.5px;top:162.60000000000002px;height:14px;line-height:14px;font-size:11px;color:#d2d2d2;">0</div>
<div class="t" style="left:1519.8px;top:162.60000000000002px;height:14px;line-height:14px;font-size:11px;color:#c4c4c4;">Y</div>
<div class="a" style="left:1532px;top:161.8px;width:61px;height:15px;background:#2a2a2a;border-radius:3px"></div>
<div class="t" style="left:1534.5px;top:162.60000000000002px;height:14px;line-height:14px;font-size:11px;color:#d2d2d2;">0</div>
<div class="t" style="left:1596.8px;top:162.60000000000002px;height:14px;line-height:14px;font-size:11px;color:#c4c4c4;">Z</div>
<div class="a" style="left:1609px;top:161.8px;width:61px;height:15px;background:#2a2a2a;border-radius:3px"></div>
<div class="t" style="left:1611.5px;top:162.60000000000002px;height:14px;line-height:14px;font-size:11px;color:#d2d2d2;">0</div>
<div class="t" style="left:1297.5px;top:180.2px;height:14px;line-height:14px;font-size:11px;color:#c4c4c4;">Rotation</div>
<div class="t" style="left:1440.8px;top:180.2px;height:14px;line-height:14px;font-size:11px;color:#c4c4c4;">X</div>
<div class="a" style="left:1453px;top:179.4px;width:61px;height:15px;background:#2a2a2a;border-radius:3px"></div>
<div class="t" style="left:1455.5px;top:180.2px;height:14px;line-height:14px;font-size:11px;color:#d2d2d2;">0</div>
<div class="t" style="left:1519.8px;top:180.2px;height:14px;line-height:14px;font-size:11px;color:#c4c4c4;">Y</div>
<div class="a" style="left:1532px;top:179.4px;width:61px;height:15px;background:#2a2a2a;border-radius:3px"></div>
<div class="t" style="left:1534.5px;top:180.2px;height:14px;line-height:14px;font-size:11px;color:#d2d2d2;">0</div>
<div class="t" style="left:1596.8px;top:180.2px;height:14px;line-height:14px;font-size:11px;color:#c4c4c4;">Z</div>
<div class="a" style="left:1609px;top:179.4px;width:61px;height:15px;background:#2a2a2a;border-radius:3px"></div>
<div class="t" style="left:1611.5px;top:180.2px;height:14px;line-height:14px;font-size:11px;color:#d2d2d2;">0</div>
<div class="t" style="left:1297.5px;top:197.8px;height:14px;line-height:14px;font-size:11px;color:#c4c4c4;">Scale</div>
<div class="t" style="left:1440.8px;top:197.8px;height:14px;line-height:14px;font-size:11px;color:#c4c4c4;">X</div>
<div class="a" style="left:1453px;top:197.0px;width:61px;height:15px;background:#2a2a2a;border-radius:3px"></div>
<div class="t" style="left:1455.5px;top:197.8px;height:14px;line-height:14px;font-size:11px;color:#d2d2d2;">1</div>
<div class="t" style="left:1519.8px;top:197.8px;height:14px;line-height:14px;font-size:11px;color:#c4c4c4;">Y</div>
<div class="a" style="left:1532px;top:197.0px;width:61px;height:15px;background:#2a2a2a;border-radius:3px"></div>
<div class="t" style="left:1534.5px;top:197.8px;height:14px;line-height:14px;font-size:11px;color:#d2d2d2;">1</div>
<div class="t" style="left:1596.8px;top:197.8px;height:14px;line-height:14px;font-size:11px;color:#c4c4c4;">Z</div>
<div class="a" style="left:1609px;top:197.0px;width:61px;height:15px;background:#2a2a2a;border-radius:3px"></div>
<div class="t" style="left:1611.5px;top:197.8px;height:14px;line-height:14px;font-size:11px;color:#d2d2d2;">1</div>
<svg class="a" style="left:1420px;top:199.5px;" width="13" height="11" viewBox="0 0 13 11"><path d="M4 2 H7 A3.5 3.5 0 0 1 7 9 H4 A3.5 3.5 0 0 1 4 2Z" stroke="#c4c4c4" stroke-width="1.2" fill="none"/><path d="M1 0.5 L12 10.5" stroke="#383838" stroke-width="2.5"/><path d="M1.5 1 L11.5 10" stroke="#c4c4c4" stroke-width="1.1"/></svg>
<div class="a" style="left:1280.8px;top:219.5px;width:393.2px;height:1px;background:#232323;"></div>
<div class="a" style="left:1280.8px;top:220.5px;width:393.2px;height:19.5px;background:#3e3e3e;"></div>
<div class="a" style="left:1280.8px;top:240px;width:393.2px;height:1px;background:#303030;"></div>
<svg class="a" style="left:1287.0px;top:227.35000000000002px;" width="7" height="6.5" viewBox="0 0 7 6.5"><path d="M0 0.2 H7 L3.5 6.3Z" fill="#5c5c5c"/></svg>
<svg class="a" style="left:1299.5px;top:223.25px;" width="12" height="14" viewBox="0 0 12 14"><path d="M0.5 0.5 H8 L11.5 4 V13.5 H0.5Z" fill="#e8f0f4"/><circle cx="6" cy="8.5" r="3.3" stroke="#2a88d0" stroke-width="1.3" fill="none"/><path d="M7.5 8.5 H10" stroke="#e8f0f4" stroke-width="2"/></svg>
<div class="a" style="left:1316px;top:224.25px;width:11.5px;height:12px;background:#262626;border-radius:2px;border:1px solid #1c1c1c"></div>
<svg class="a" style="left:1318px;top:226.75px;" width="7.5" height="7" viewBox="0 0 7.5 7"><path d="M0.5 3.5 L2.85 6.2 L7.0 0.8" stroke="#e8e8e8" stroke-width="1.5" fill="none"/></svg>
<div class="t" style="left:1333.6px;top:223.25px;height:14px;line-height:14px;font-size:11px;color:#d2d2d2;font-weight:bold;-webkit-text-stroke:0.05px currentColor">Image Target Behaviour (Script)</div>
<svg class="a" style="left:1622px;top:224.75px;" width="11" height="11" viewBox="0 0 11 11"><circle cx="5.5" cy="5.5" r="5.2" fill="#c4c4c4"/><text x="5.5" y="8.8" text-anchor="middle" font-family="Liberation Sans" font-weight="bold" font-size="9" fill="#3e3e3e">?</text></svg>
<svg class="a" style="left:1639px;top:224.75px;" width="12" height="11" viewBox="0 0 12 11"><path d="M0.5 3 H11.5 M0.5 8 H11.5" stroke="#c4c4c4" stroke-width="1.2"/><rect x="6.5" y="0.5" width="2" height="5" fill="#c4c4c4"/><rect x="2.5" y="5.5" width="2" height="5" fill="#c4c4c4"/></svg>
<svg class="a" style="left:1660.5px;top:225.25px;" width="3" height="10" viewBox="0 0 3 10"><circle cx="1.5" cy="1.5" r="1" fill="#c4c4c4"/><circle cx="1.5" cy="5" r="1" fill="#c4c4c4"/><circle cx="1.5" cy="8.5" r="1" fill="#c4c4c4"/></svg>
<div class="a" style="left:1296.7px;top:244.3px;width:372.5999999999999px;height:14.300000000000011px;background:#4f4f4f;border-radius:3px;box-shadow:0 1px 0 #242424"></div>
<div class="t" style="left:1296.7px;top:244.3px;width:372.5999999999999px;height:14.300000000000011px;line-height:14.300000000000011px;text-align:center;font-size:11px;color:#d2d2d2">Download new Vuforia Engine version: 10.15.3</div>
<div class="t" style="left:1297.4px;top:270.0px;height:14px;line-height:14px;font-size:11px;color:#c4c4c4;">Type</div>
<div class="a" style="left:1441.4px;top:270px;width:227.5999999999999px;height:13.800000000000011px;background:#515151;border-radius:3px"></div>
<div class="t" style="left:1443.5px;top:269.9px;height:14px;line-height:14px;font-size:11px;color:#c8c8c8;">From Database</div>
<svg class="a" style="left:1656.0px;top:273.9px;" width="9.0" height="7.0" viewBox="0 0 9.0 7.0"><path d="M1 1.75 L8.0 1.75 L4.5 5.6000000000000005 Z" fill="#c8c8c8"/></svg>
<div class="t" style="left:1297.4px;top:287.4px;height:14px;line-height:14px;font-size:11px;color:#c4c4c4;">Database</div>
<div class="a" style="left:1441.4px;top:287.4px;width:227.5999999999999px;height:13.800000000000011px;background:#515151;border-radius:3px"></div>
<div class="t" style="left:1443.5px;top:287.29999999999995px;height:14px;line-height:14px;font-size:11px;color:#c8c8c8;">PuzzleDatabase</div>
<svg class="a" style="left:1656.0px;top:291.29999999999995px;" width="9.0" height="7.0" viewBox="0 0 9.0 7.0"><path d="M1 1.75 L8.0 1.75 L4.5 5.6000000000000005 Z" fill="#c8c8c8"/></svg>
<div class="t" style="left:1297.4px;top:305.0px;height:14px;line-height:14px;font-size:11px;color:#c4c4c4;">Image Target</div>
<div class="a" style="left:1441.4px;top:305px;width:227.5999999999999px;height:13.800000000000011px;background:#515151;border-radius:3px"></div>
<div class="t" style="left:1443.5px;top:304.9px;height:14px;line-height:14px;font-size:11px;color:#c8c8c8;">Screenshot_8</div>
<svg class="a" style="left:1656.0px;top:308.9px;" width="9.0" height="7.0" viewBox="0 0 9.0 7.0"><path d="M1 1.75 L8.0 1.75 L4.5 5.6000000000000005 Z" fill="#c8c8c8"/></svg>
<div class="a" style="left:1439.5px;top:322.4px;width:146.5px;height:15.900000000000034px;background:#585858;border-radius:3px;box-shadow:0 1px 0 #242424"></div>
<div class="t" style="left:1439.5px;top:322.4px;width:146.5px;height:15.900000000000034px;line-height:15.900000000000034px;text-align:center;font-size:11px;color:#d2d2d2">Add Target</div>
<div class="a" style="left:1334.3px;top:352.9px;width:146.70000000000005px;height:15.900000000000034px;background:#585858;border-radius:3px;box-shadow:0 1px 0 #242424"></div>
<div class="t" style="left:1334.3px;top:352.9px;width:146.70000000000005px;height:15.900000000000034px;line-height:15.900000000000034px;text-align:center;font-size:11px;color:#d2d2d2">Add Occlusion Object</div>
<div class="a" style="left:1486px;top:352.9px;width:146.4000000000001px;height:15.900000000000034px;background:#585858;border-radius:3px;box-shadow:0 1px 0 #242424"></div>
<div class="t" style="left:1486px;top:352.9px;width:146.4000000000001px;height:15.900000000000034px;line-height:15.900000000000034px;text-align:center;font-size:11px;color:#d2d2d2">Add Target Representation</div>
<svg class="a" style="left:1287px;top:377.5px;" width="7" height="8" viewBox="0 0 7 8"><path d="M0.5 0.5 V7.5 L6.5 4Z" fill="#5c5c5c"/></svg>
<div class="t" style="left:1297.4px;top:374.2px;height:14px;line-height:14px;font-size:11px;color:#c4c4c4;">Advanced</div>
<div class="a" style="left:1280.8px;top:394.5px;width:393.2px;height:1px;background:#232323;"></div>
<div class="a" style="left:1280.8px;top:395.5px;width:393.2px;height:18.0px;background:#3e3e3e;"></div>
<div class="a" style="left:1280.8px;top:413.5px;width:393.2px;height:1px;background:#303030;"></div>
<svg class="a" style="left:1287.0px;top:401.6px;" width="7" height="6.5" viewBox="0 0 7 6.5"><path d="M0 0.2 H7 L3.5 6.3Z" fill="#5c5c5c"/></svg>
<svg class="a" style="left:1299.5px;top:397.5px;" width="12" height="14" viewBox="0 0 12 14"><path d="M0.5 0.5 H8 L11.5 4 V13.5 H0.5Z" fill="#e8f0f4"/><path d="M4 5 V12 M7.5 5 V12 M2.5 7 H9.5 M2.5 10 H9.5" stroke="#3aa060" stroke-width="1.1"/></svg>
<div class="a" style="left:1316px;top:398.5px;width:11.5px;height:12px;background:#262626;border-radius:2px;border:1px solid #1c1c1c"></div>
<svg class="a" style="left:1318px;top:401.0px;" width="7.5" height="7" viewBox="0 0 7.5 7"><path d="M0.5 3.5 L2.85 6.2 L7.0 0.8" stroke="#e8e8e8" stroke-width="1.5" fill="none"/></svg>
<div class="t" style="left:1333.6px;top:397.5px;height:14px;line-height:14px;font-size:11px;color:#d2d2d2;font-weight:bold;-webkit-text-stroke:0.05px currentColor">Default Observer Event Handler (Script)</div>
<svg class="a" style="left:1622px;top:399.0px;" width="11" height="11" viewBox="0 0 11 11"><circle cx="5.5" cy="5.5" r="5.2" fill="#c4c4c4"/><text x="5.5" y="8.8" text-anchor="middle" font-family="Liberation Sans" font-weight="bold" font-size="9" fill="#3e3e3e">?</text></svg>
<svg class="a" style="left:1639px;top:399.0px;" width="12" height="11" viewBox="0 0 12 11"><path d="M0.5 3 H11.5 M0.5 8 H11.5" stroke="#c4c4c4" stroke-width="1.2"/><rect x="6.5" y="0.5" width="2" height="5" fill="#c4c4c4"/><rect x="2.5" y="5.5" width="2" height="5" fill="#c4c4c4"/></svg>
<svg class="a" style="left:1660.5px;top:399.5px;" width="3" height="10" viewBox="0 0 3 10"><circle cx="1.5" cy="1.5" r="1" fill="#c4c4c4"/><circle cx="1.5" cy="5" r="1" fill="#c4c4c4"/><circle cx="1.5" cy="8.5" r="1" fill="#c4c4c4"/></svg>
<div class="t" style="left:1297.4px;top:418.5px;height:14px;line-height:14px;font-size:11px;color:#8a8a8a;">Script</div>
<div class="a" style="left:1441px;top:418.8px;width:228px;height:13.5px;background:#2f2f2f;border-radius:3px"></div>
<svg class="a" style="left:1444px;top:420.5px;" width="8" height="10" viewBox="0 0 8 10"><path d="M0.5 0.5 H5.5 L7.5 2.5 V9.5 H0.5Z" fill="#8a8a8a"/></svg>
<div class="t" style="left:1453.5px;top:418.5px;height:14px;line-height:14px;font-size:11px;color:#8a8a8a;">DefaultObserverEventHandler</div>
<svg class="a" style="left:1656px;top:420px;" width="11" height="11" viewBox="0 0 11 11"><circle cx="5.5" cy="5.5" r="4.6" stroke="#8a8a8a" stroke-width="1.1" fill="none"/><circle cx="5.5" cy="5.5" r="1.6" fill="#8a8a8a"/></svg>
<div class="t" style="left:1298.5px;top:435.4px;height:14px;line-height:14px;font-size:11px;color:#c4c4c4;">Consider target as visible if its status is:</div>
<div class="a" style="left:1297px;top:452.6px;width:372px;height:13.599999999999966px;background:#515151;border-radius:3px"></div>
<div class="t" style="left:1300.5px;top:452.4px;height:14px;line-height:14px;font-size:11px;color:#d2d2d2;">Tracked or Extended Tracked</div>
<svg class="a" style="left:1656.0px;top:456.4px;" width="9.0" height="7.0" viewBox="0 0 9.0 7.0"><path d="M1 1.75 L8.0 1.75 L4.5 5.6000000000000005 Z" fill="#c8c8c8"/></svg>
<div class="t" style="left:1297.4px;top:477.3px;height:14px;line-height:14px;font-size:11px;color:#c4c4c4;">Use smooth transition on pos</div>
<div class="a" style="left:1440px;top:477.6px;width:12px;height:12px;background:#2a2a2a;border-radius:2px"></div>
<div class="t" style="left:1298.5px;top:501.0px;height:14px;line-height:14px;font-size:11px;color:#c4c4c4;">Event(s) when target is found:</div>
<div class="a" style="left:1297px;top:518px;width:372px;height:63.5px;background:#414141;border:1px solid #2a2a2a;border-radius:3px 3px 0 3px"></div>
<div class="a" style="left:1297px;top:518px;width:372px;height:16.3px;background:#323232;border-radius:3px 3px 0 0;border:1px solid #2a2a2a"></div>
<div class="t" style="left:1303.5px;top:519.3px;height:14px;line-height:14px;font-size:11px;color:#c8c8c8;">On Target Found ()</div>
<div class="t" style="left:1303.5px;top:551.5px;height:14px;line-height:14px;font-size:11px;color:#c4c4c4;">List is Empty</div>
<div class="a" style="left:1611.4px;top:581px;width:49.6px;height:16.5px;background:#3a3a3a;border:1px solid #2a2a2a;border-top:none;border-radius:0 0 3px 3px"></div>
<svg class="a" style="left:1619.5px;top:584.5px;" width="10" height="10" viewBox="0 0 10 10"><path d="M5 0.5 V9.5 M0.5 5 H9.5" stroke="#e0e0e0" stroke-width="1.5"/></svg>
<div class="a" style="left:1642.5px;top:589px;width:7.5px;height:1.4px;background:#9a9a9a;"></div>
<div class="t" style="left:1298.5px;top:602.0px;height:14px;line-height:14px;font-size:11px;color:#c4c4c4;">Event(s) when target is lost:</div>
<div class="a" style="left:1297px;top:619.3px;width:372px;height:63.5px;background:#414141;border:1px solid #2a2a2a;border-radius:3px 3px 0 3px"></div>
<div class="a" style="left:1297px;top:619.3px;width:372px;height:16.3px;background:#323232;border-radius:3px 3px 0 0;border:1px solid #2a2a2a"></div>
<div class="t" style="left:1303.5px;top:620.5999999999999px;height:14px;line-height:14px;font-size:11px;color:#c8c8c8;">On Target Lost ()</div>
<div class="t" style="left:1303.5px;top:652.8px;height:14px;line-height:14px;font-size:11px;color:#c4c4c4;">List is Empty</div>
<div class="a" style="left:1611.4px;top:682.3px;width:49.6px;height:16.5px;background:#3a3a3a;border:1px solid #2a2a2a;border-top:none;border-radius:0 0 3px 3px"></div>
<svg class="a" style="left:1619.5px;top:685.8px;" width="10" height="10" viewBox="0 0 10 10"><path d="M5 0.5 V9.5 M0.5 5 H9.5" stroke="#e0e0e0" stroke-width="1.5"/></svg>
<div class="a" style="left:1642.5px;top:690.3px;width:7.5px;height:1.4px;background:#9a9a9a;"></div>
<div class="a" style="left:1280.8px;top:708.5px;width:393.2px;height:1px;background:#232323;"></div>
<div class="a" style="left:1280.8px;top:709.5px;width:393.2px;height:18.700000000000045px;background:#3e3e3e;"></div>
<div class="a" style="left:1280.8px;top:728.2px;width:393.2px;height:1px;background:#303030;"></div>
<svg class="a" style="left:1287.0px;top:715.9499999999999px;" width="7" height="6.5" viewBox="0 0 7 6.5"><path d="M0 0.2 H7 L3.5 6.3Z" fill="#5c5c5c"/></svg>
<svg class="a" style="left:1299.5px;top:711.85px;" width="12" height="14" viewBox="0 0 12 14"><path d="M0.5 0.5 H8 L11.5 4 V13.5 H0.5Z" fill="#e8f0f4"/><circle cx="6" cy="8.5" r="3.3" stroke="#2a88d0" stroke-width="1.3" fill="none"/><path d="M7.5 8.5 H10" stroke="#e8f0f4" stroke-width="2"/></svg>
<div class="t" style="left:1333.6px;top:711.85px;height:14px;line-height:14px;font-size:11px;color:#d2d2d2;font-weight:bold;-webkit-text-stroke:0.05px currentColor">Image Target Preview (Script)</div>
<svg class="a" style="left:1622px;top:713.35px;" width="11" height="11" viewBox="0 0 11 11"><circle cx="5.5" cy="5.5" r="5.2" fill="#c4c4c4"/><text x="5.5" y="8.8" text-anchor="middle" font-family="Liberation Sans" font-weight="bold" font-size="9" fill="#3e3e3e">?</text></svg>
<svg class="a" style="left:1639px;top:713.35px;" width="12" height="11" viewBox="0 0 12 11"><path d="M0.5 3 H11.5 M0.5 8 H11.5" stroke="#c4c4c4" stroke-width="1.2"/><rect x="6.5" y="0.5" width="2" height="5" fill="#c4c4c4"/><rect x="2.5" y="5.5" width="2" height="5" fill="#c4c4c4"/></svg>
<svg class="a" style="left:1660.5px;top:713.85px;" width="3" height="10" viewBox="0 0 3 10"><circle cx="1.5" cy="1.5" r="1" fill="#c4c4c4"/><circle cx="1.5" cy="5" r="1" fill="#c4c4c4"/><circle cx="1.5" cy="8.5" r="1" fill="#c4c4c4"/></svg>
<div class="t" style="left:1297.4px;top:733.8px;height:14px;line-height:14px;font-size:11px;color:#c4c4c4;">Enable Visualization</div>
<div class="a" style="left:1440px;top:734.2px;width:12px;height:12px;background:#262626;border-radius:2px;border:1px solid #1c1c1c"></div>
<svg class="a" style="left:1442px;top:736.7px;" width="8" height="7" viewBox="0 0 8 7"><path d="M0.5 3.5 L3.04 6.2 L7.5 0.8" stroke="#e8e8e8" stroke-width="1.5" fill="none"/></svg>
<div class="a" style="left:1280.8px;top:756px;width:393.2px;height:1px;background:#232323;"></div>
<div class="a" style="left:1377.8px;top:764.8px;width:199.70000000000005px;height:19.0px;background:#585858;border-radius:3px;box-shadow:0 1px 0 #242424"></div>
<div class="t" style="left:1377.8px;top:764.8px;width:199.70000000000005px;height:19.0px;line-height:19.0px;text-align:center;font-size:11px;color:#d2d2d2">Add Component</div>
<div class="a" style="left:7px;top:588px;width:181px;height:295.6px;background:#383838;"></div>
<div class="a" style="left:188px;top:588px;width:1px;height:295.6px;background:#242424;"></div>
<div class="a" style="left:189px;top:588px;width:1090.3px;height:18px;background:#3e3e3e;"></div>
<div class="a" style="left:189px;top:606px;width:1090.3px;height:1px;background:#2e2e2e;"></div>
<svg class="a" style="left:13px;top:558.5px;" width="11" height="9" viewBox="0 0 11 9"><path d="M0.5 1.5 H4 L5 3 H10.5 V8.5 H0.5Z" fill="#c8c8c8"/></svg>
<div class="t" style="left:27.5px;top:555.5px;height:14px;line-height:14px;font-size:11px;color:#c8c8c8;">Project</div>
<svg class="a" style="left:85.5px;top:557px;" width="10" height="11" viewBox="0 0 10 11"><rect x="0.5" y="0.5" width="8" height="10" fill="#c8c8c8"/><path d="M2 3 H7 M2 5.5 H7 M2 8 H7" stroke="#262626" stroke-width="1"/><rect x="8" y="2" width="1.5" height="2" fill="#c8c8c8"/></svg>
<div class="t" style="left:99px;top:555.5px;height:14px;line-height:14px;font-size:11px;color:#c8c8c8;">Console</div>
<svg class="a" style="left:1248px;top:556.5px;" width="8" height="9" viewBox="0 0 8 9"><path d="M1.5 4 V2.5 A2.5 2.2 0 0 1 6.5 2.5" stroke="#c4c4c4" stroke-width="1.1" fill="none"/><rect x="0.8" y="4.6" width="6.4" height="3.8" stroke="#c4c4c4" stroke-width="1.1" fill="none"/></svg>
<svg class="a" style="left:1265.5px;top:556.5px;" width="3" height="10" viewBox="0 0 3 10"><circle cx="1.5" cy="1.5" r="1" fill="#c4c4c4"/><circle cx="1.5" cy="5" r="1" fill="#c4c4c4"/><circle cx="1.5" cy="8.5" r="1" fill="#c4c4c4"/></svg>
<svg class="a" style="left:13px;top:574px;" width="12" height="11" viewBox="0 0 12 11"><path d="M6 0.5 V10.5 M0.5 5.5 H11.5" stroke="#dcdcdc" stroke-width="1.6"/></svg>
<svg class="a" style="left:26.5px;top:576px;" width="8" height="6" viewBox="0 0 8 6"><path d="M1 1.5 L7 1.5 L4 4.800000000000001 Z" fill="#c4c4c4"/></svg>
<div class="a" style="left:901.5px;top:572px;width:261.5px;height:13.5px;background:#2a2a2a;border-radius:3px;border:1px solid #232323"></div>
<svg class="a" style="left:904.5px;top:575px;" width="8" height="8" viewBox="0 0 8 8"><circle cx="3.2" cy="3.2" r="2.3" stroke="#bbb" stroke-width="1.2" fill="none"/><path d="M4.8 4.8 L7.3 7.3" stroke="#bbb" stroke-width="1.4"/></svg>
<svg class="a" style="left:1165px;top:573px;" width="13" height="12" viewBox="0 0 13 12"><rect x="4" y="0.5" width="8" height="8" stroke="#c4c4c4" stroke-width="1" fill="none"/><path d="M5.5 7 L10 2.5 M7 2.5 H10 V5.5" stroke="#c4c4c4" stroke-width="1" fill="none"/><rect x="0.5" y="8" width="3.5" height="3.5" stroke="#c4c4c4" stroke-width="1" fill="none"/></svg>
<div class="a" style="left:1181px;top:571px;width:1px;height:16px;background:#303030;"></div>
<div class="a" style="left:1203.5px;top:571px;width:1px;height:16px;background:#303030;"></div>
<div class="a" style="left:1226.5px;top:571px;width:1px;height:16px;background:#303030;"></div>
<div class="a" style="left:1249px;top:571px;width:1px;height:16px;background:#303030;"></div>
<svg class="a" style="left:1186px;top:572.5px;" width="14" height="13" viewBox="0 0 14 13"><rect x="1" y="0.5" width="5" height="5" fill="#c4c4c4"/><circle cx="4" cy="9" r="3.5" fill="#c4c4c4"/><path d="M8 5 L12.5 10 H7.5Z" fill="#c4c4c4"/></svg>
<svg class="a" style="left:1209px;top:573px;" width="12" height="12" viewBox="0 0 12 12"><path d="M5 0.5 H11.5 V7 L6.5 12 L0 5.5Z" fill="#c4c4c4"/><circle cx="8.5" cy="3.5" r="1.2" fill="#3c3c3c"/></svg>
<svg class="a" style="left:1232px;top:573px;" width="12" height="12" viewBox="0 0 12 12"><path d="M6 0.5 L7.6 4.2 L11.6 4.5 L8.6 7.2 L9.5 11.3 L6 9.2 L2.5 11.3 L3.4 7.2 L0.4 4.5 L4.4 4.2Z" fill="#8c8c8c"/></svg>
<svg class="a" style="left:1254px;top:573px;" width="21" height="12" viewBox="0 0 21 12"><path d="M0.8 6 Q6.5 0 12.2 6 Q6.5 12 0.8 6Z" stroke="#c4c4c4" stroke-width="1.1" fill="none"/><circle cx="6.5" cy="6" r="1.8" fill="#c4c4c4"/><path d="M1.5 11 L11.5 1" stroke="#c4c4c4" stroke-width="1.3"/><text x="13.5" y="10.5" font-family="Liberation Sans" font-size="11" fill="#c4c4c4">8</text></svg>
<svg class="a" style="left:11.0px;top:591.0999999999999px;" width="7" height="6.5" viewBox="0 0 7 6.5"><path d="M0 0.2 H7 L3.5 6.3Z" fill="#5c5c5c"/></svg>
<svg class="a" style="left:23px;top:588.5px;" width="11" height="11" viewBox="0 0 11 11"><path d="M5.5 0.5 L7 4 L10.7 4.2 L7.8 6.6 L8.8 10.4 L5.5 8.3 L2.2 10.4 L3.2 6.6 L0.3 4.2 L4 4Z" fill="#d0d0d0"/></svg>
<div class="t" style="left:37.8px;top:587.0px;height:14px;line-height:14px;font-size:11px;color:#d2d2d2;font-weight:bold;-webkit-text-stroke:0.05px currentColor">Favorites</div>
<svg class="a" style="left:35px;top:602.7px;" width="11" height="11" viewBox="0 0 11 11"><circle cx="4.3" cy="4.3" r="3.5" stroke="#c4c4c4" stroke-width="1.1" fill="none"/><path d="M6.8 6.8 L10 10" stroke="#c4c4c4" stroke-width="1.3"/></svg>
<div class="t" style="left:49px;top:601.2px;height:14px;line-height:14px;font-size:11px;color:#c4c4c4;">All Materials</div>
<svg class="a" style="left:35px;top:616.7px;" width="11" height="11" viewBox="0 0 11 11"><circle cx="4.3" cy="4.3" r="3.5" stroke="#c4c4c4" stroke-width="1.1" fill="none"/><path d="M6.8 6.8 L10 10" stroke="#c4c4c4" stroke-width="1.3"/></svg>
<div class="t" style="left:49px;top:615.2px;height:14px;line-height:14px;font-size:11px;color:#c4c4c4;">All Models</div>
<svg class="a" style="left:35px;top:630.7px;" width="11" height="11" viewBox="0 0 11 11"><circle cx="4.3" cy="4.3" r="3.5" stroke="#c4c4c4" stroke-width="1.1" fill="none"/><path d="M6.8 6.8 L10 10" stroke="#c4c4c4" stroke-width="1.3"/></svg>
<div class="t" style="left:49px;top:629.2px;height:14px;line-height:14px;font-size:11px;color:#c4c4c4;">All Prefabs</div>
<svg class="a" style="left:11.0px;top:660.0999999999999px;" width="7" height="6.5" viewBox="0 0 7 6.5"><path d="M0 0.2 H7 L3.5 6.3Z" fill="#5c5c5c"/></svg>
<svg class="a" style="left:22px;top:657.5px;" width="13" height="11" viewBox="0 0 13 11"><path d="M0.5 1 H4.5 L5.5 2.5 H10.5 V4.5 H3 L0.5 10Z" fill="#c8c8c8"/><path d="M3.2 5 H12.5 L10 10.5 H0.5Z" fill="#c8c8c8"/></svg>
<div class="t" style="left:38px;top:656.0px;height:14px;line-height:14px;font-size:11px;color:#d2d2d2;font-weight:bold;-webkit-text-stroke:0.05px currentColor">Assets</div>
<div class="a" style="left:7px;top:670px;width:171px;height:213.6px;overflow:hidden">
<svg class="a" style="left:15.5px;top:4px" width="8" height="7"><path d="M0.5 0.2 H7.5 L4 6.5Z" fill="#5c5c5c"/></svg>
<svg class="a" style="left:28.0px;top:1.5px" width="13" height="11"><path d="M0.5 1 H4.5 L5.5 2.5 H10.5 V4.5 H3 L0.5 10Z" fill="#c8c8c8"/><path d="M3.2 5 H12.5 L10 10.5 H0.5Z" fill="#c8c8c8"/></svg>
<div class="t" style="left:42.0px;top:0px;height:14px;line-height:14px;font-size:11px;color:#c4c4c4">_Data</div>
<svg class="a" style="left:27.75px;top:18px" width="8" height="7"><path d="M0.5 0.2 H7.5 L4 6.5Z" fill="#5c5c5c"/></svg>
<svg class="a" style="left:40.25px;top:15.5px" width="13" height="11"><path d="M0.5 1 H4.5 L5.5 2.5 H10.5 V4.5 H3 L0.5 10Z" fill="#c8c8c8"/><path d="M3.2 5 H12.5 L10 10.5 H0.5Z" fill="#c8c8c8"/></svg>
<div class="t" style="left:54.25px;top:14px;height:14px;line-height:14px;font-size:11px;color:#c4c4c4">_Scenes</div>
<svg class="a" style="left:40.0px;top:32px" width="8" height="7"><path d="M0.5 0.2 H7.5 L4 6.5Z" fill="#5c5c5c"/></svg>
<svg class="a" style="left:52.5px;top:29.5px" width="13" height="11"><path d="M0.5 1 H4.5 L5.5 2.5 H10.5 V4.5 H3 L0.5 10Z" fill="#c8c8c8"/><path d="M3.2 5 H12.5 L10 10.5 H0.5Z" fill="#c8c8c8"/></svg>
<div class="t" style="left:66.5px;top:28px;height:14px;line-height:14px;font-size:11px;color:#c4c4c4">_sr</div>
<svg class="a" style="left:64.75px;top:43.5px" width="13" height="11"><path d="M0.5 1 H4.5 L5.5 2.5 H11.5 V10.5 H0.5Z" fill="#c8c8c8"/></svg>
<div class="t" style="left:78.75px;top:42px;height:14px;line-height:14px;font-size:11px;color:#c4c4c4">Materials</div>
<svg class="a" style="left:15.5px;top:60px" width="8" height="7"><path d="M0.5 0.2 H7.5 L4 6.5Z" fill="#5c5c5c"/></svg>
<svg class="a" style="left:28.0px;top:57.5px" width="13" height="11"><path d="M0.5 1 H4.5 L5.5 2.5 H10.5 V4.5 H3 L0.5 10Z" fill="#c8c8c8"/><path d="M3.2 5 H12.5 L10 10.5 H0.5Z" fill="#c8c8c8"/></svg>
<div class="t" style="left:42.0px;top:56px;height:14px;line-height:14px;font-size:11px;color:#c4c4c4">Editor</div>
<svg class="a" style="left:40.25px;top:71.5px" width="13" height="11"><path d="M0.5 1 H4.5 L5.5 2.5 H11.5 V10.5 H0.5Z" fill="#c8c8c8"/></svg>
<div class="t" style="left:54.25px;top:70px;height:14px;line-height:14px;font-size:11px;color:#c4c4c4">Migration</div>
<svg class="a" style="left:27.75px;top:88px" width="8" height="7"><path d="M0.5 0.2 H7.5 L4 6.5Z" fill="#5c5c5c"/></svg>
<svg class="a" style="left:40.25px;top:85.5px" width="13" height="11"><path d="M0.5 1 H4.5 L5.5 2.5 H10.5 V4.5 H3 L0.5 10Z" fill="#c8c8c8"/><path d="M3.2 5 H12.5 L10 10.5 H0.5Z" fill="#c8c8c8"/></svg>
<div class="t" style="left:54.25px;top:84px;height:14px;line-height:14px;font-size:11px;color:#c4c4c4">Vuforia</div>
<svg class="a" style="left:40.0px;top:102px" width="8" height="7"><path d="M0.5 0.2 H7.5 L4 6.5Z" fill="#5c5c5c"/></svg>
<svg class="a" style="left:52.5px;top:99.5px" width="13" height="11"><path d="M0.5 1 H4.5 L5.5 2.5 H10.5 V4.5 H3 L0.5 10Z" fill="#c8c8c8"/><path d="M3.2 5 H12.5 L10 10.5 H0.5Z" fill="#c8c8c8"/></svg>
<div class="t" style="left:66.5px;top:98px;height:14px;line-height:14px;font-size:11px;color:#c4c4c4">ImageTargetTextures</div>
<svg class="a" style="left:64.75px;top:113.5px" width="13" height="11"><path d="M0.5 1 H4.5 L5.5 2.5 H11.5 V10.5 H0.5Z" fill="#c8c8c8"/></svg>
<div class="t" style="left:78.75px;top:112px;height:14px;line-height:14px;font-size:11px;color:#c4c4c4">PuzzleDatabase</div>
<svg class="a" style="left:16.5px;top:129px" width="7" height="8"><path d="M0.5 0.5 V7.5 L6.5 4Z" fill="#5c5c5c"/></svg>
<svg class="a" style="left:28.0px;top:127.5px" width="13" height="11"><path d="M0.5 1 H4.5 L5.5 2.5 H11.5 V10.5 H0.5Z" fill="#c8c8c8"/></svg>
<div class="t" style="left:42.0px;top:126px;height:14px;line-height:14px;font-size:11px;color:#c4c4c4">Plugins</div>
<div class="a" style="left:0;top:140px;width:171px;height:14px;background:#4d4d4d"></div>
<svg class="a" style="left:28.0px;top:141.5px" width="13" height="11"><path d="M0.5 1 H4.5 L5.5 2.5 H11.5 V10.5 H0.5Z" fill="#c8c8c8"/></svg>
<div class="t" style="left:42.0px;top:140px;height:14px;line-height:14px;font-size:11px;color:#c4c4c4">Resources</div>
<svg class="a" style="left:15.5px;top:158px" width="8" height="7"><path d="M0.5 0.2 H7.5 L4 6.5Z" fill="#5c5c5c"/></svg>
<svg class="a" style="left:28.0px;top:155.5px" width="13" height="11"><path d="M0.5 1 H4.5 L5.5 2.5 H10.5 V4.5 H3 L0.5 10Z" fill="#c8c8c8"/><path d="M3.2 5 H12.5 L10 10.5 H0.5Z" fill="#c8c8c8"/></svg>
<div class="t" style="left:42.0px;top:154px;height:14px;line-height:14px;font-size:11px;color:#c4c4c4">StreamingAssets</div>
<svg class="a" style="left:40.25px;top:169.5px" width="13" height="11"><path d="M0.5 1 H4.5 L5.5 2.5 H11.5 V10.5 H0.5Z" fill="#c8c8c8"/></svg>
<div class="t" style="left:54.25px;top:168px;height:14px;line-height:14px;font-size:11px;color:#c4c4c4">Vuforia</div>
<svg class="a" style="left:15.5px;top:186px" width="8" height="7"><path d="M0.5 0.2 H7.5 L4 6.5Z" fill="#5c5c5c"/></svg>
<svg class="a" style="left:28.0px;top:183.5px" width="13" height="11"><path d="M0.5 1 H4.5 L5.5 2.5 H10.5 V4.5 H3 L0.5 10Z" fill="#c8c8c8"/><path d="M3.2 5 H12.5 L10 10.5 H0.5Z" fill="#c8c8c8"/></svg>
<div class="t" style="left:42.0px;top:182px;height:14px;line-height:14px;font-size:11px;color:#c4c4c4">XR</div>
<svg class="a" style="left:40.25px;top:197.5px" width="13" height="11"><path d="M0.5 1 H4.5 L5.5 2.5 H11.5 V10.5 H0.5Z" fill="#c8c8c8"/></svg>
<div class="t" style="left:54.25px;top:196px;height:14px;line-height:14px;font-size:11px;color:#c4c4c4">Loaders</div>
<svg class="a" style="left:40.25px;top:211.5px" width="13" height="11"><path d="M0.5 1 H4.5 L5.5 2.5 H11.5 V10.5 H0.5Z" fill="#c8c8c8"/></svg>
<div class="t" style="left:54.25px;top:210px;height:14px;line-height:14px;font-size:11px;color:#c4c4c4">Samples</div>
</div>
<div class="a" style="left:177.5px;top:588px;width:10.5px;height:295.6px;background:#2f2f2f;"></div>
<svg class="a" style="left:179px;top:593.5px;" width="8" height="6" viewBox="0 0 8 6"><path d="M0.5 5.5 L4 1 L7.5 5.5Z" fill="#c4c4c4"/></svg>
<div class="a" style="left:178.5px;top:604px;width:8.5px;height:245px;background:#5a5a5a;border-radius:4.5px"></div>
<svg class="a" style="left:179px;top:874px;" width="8" height="6" viewBox="0 0 8 6"><path d="M0.5 0.5 L4 5 L7.5 0.5Z" fill="#c4c4c4"/></svg>
<div class="t" style="left:192.6px;top:590.2px;height:14px;line-height:14px;font-size:11px;color:#b4b4b4;">Assets</div>
<svg class="a" style="left:231px;top:592.5px;" width="6" height="9" viewBox="0 0 6 9"><path d="M0.8 0.8 L4.8 4.5 L0.8 8.2" stroke="#9a9a9a" stroke-width="1.1" fill="none"/></svg>
<div class="t" style="left:240.9px;top:590.2px;height:14px;line-height:14px;font-size:11px;color:#d2d2d2;font-weight:bold;-webkit-text-stroke:0.05px currentColor;letter-spacing:-0.3px">Resources</div>
<svg class="a" style="left:205px;top:618px;" width="56" height="54" viewBox="0 0 56 54"><path d="M40.8 22.9 V14.3 L23.6 4.2 L6.1 13.7 V34.7 L23.6 44.2 L25.5 44.2 M23.6 44.2 V23.9 M6.1 13.7 L23.6 23.9 L40.8 14.3" stroke="#88d2f2" stroke-width="3.1" fill="none" stroke-linejoin="round" stroke-linecap="round"/><path d="M40 27.5 H37.5 Q34.5 27.5 34.5 30.5 V35.5 Q34.5 38.2 30 38.2 Q34.5 38.2 34.5 41 V45.5 Q34.5 48.5 37.5 48.5 H40 M41.5 27.5 H44 Q47 27.5 47 30.5 V35.5 Q47 38.2 51.5 38.2 Q47 38.2 47 41 V45.5 Q47 48.5 44 48.5 H41.5" stroke="#f0704a" stroke-width="3" fill="none"/></svg>
<div class="t" style="left:203px;top:672.1px;height:14px;line-height:14px;font-size:9.6px;color:#c4c4c4;">VuforiaCon...</div>
<div class="a" style="left:189px;top:865.6px;width:1090.3px;height:18px;background:#3e3e3e;"></div>
<div class="a" style="left:189px;top:865.6px;width:1090.3px;height:1px;background:#2a2a2a;"></div>
<div class="a" style="left:189px;top:882px;width:1090.3px;height:1.6px;background:#505050;"></div>
<div class="a" style="left:1216px;top:874.2px;width:50px;height:1.5px;background:#8a8a8a;border-radius:1px"></div>
<div class="a" style="left:1240px;top:870px;width:9.5px;height:9.5px;border-radius:50%;background:#c8c8c8"></div>
<svg class="a" style="left:9.5px;top:887px;" width="11.5" height="11" viewBox="0 0 11.5 11"><path d="M5.75 0.5 L11.2 10.5 H0.3Z" fill="#f2c12e"/><path d="M5.75 3.5 V7" stroke="#2a2a2a" stroke-width="1.3"/><circle cx="5.75" cy="8.8" r="0.75" fill="#2a2a2a"/></svg>
<div class="t" style="left:24.4px;top:887.0px;height:14px;line-height:14px;font-size:11px;color:#d8b84a;">Unity 2020 LTS will be the last version of the editor which supports Magic Leap 1. Developers can continue to build for Magic Leap 1 using Unity 2020 LTS or 2019 LTS.</div>
<svg class="a" style="left:1586px;top:887px;" width="14" height="14" viewBox="0 0 14 14"><ellipse cx="7" cy="8" rx="4" ry="5" fill="#c8c8c8"/><path d="M1 4 L4 6 M13 4 L10 6 M0.5 8.5 H3 M13.5 8.5 H11 M1 13 L4 11 M13 13 L10 11 M1 1 L13 13" stroke="#c8c8c8" stroke-width="1.2"/></svg>
<svg class="a" style="left:1609px;top:887px;" width="14" height="14" viewBox="0 0 14 14"><ellipse cx="6.5" cy="3" rx="5.5" ry="2.3" fill="#c8c8c8"/><path d="M1 5.5 Q6.5 8.5 12 5.5 V8 Q6.5 11 1 8Z M1 10 Q6.5 13 12 10 V11.5 Q6.5 14.5 1 11.5Z" fill="#c8c8c8"/><path d="M2 1 L13 13" stroke="#1b1b1b" stroke-width="1"/></svg>
<svg class="a" style="left:1632px;top:887px;" width="14" height="14" viewBox="0 0 14 14"><circle cx="7" cy="7" r="5" stroke="#c8c8c8" stroke-width="1.6" fill="none" stroke-dasharray="4 2"/><path d="M1 1 L13 13" stroke="#c8c8c8" stroke-width="1.2"/></svg>
<svg class="a" style="left:1655px;top:887px;" width="14" height="14" viewBox="0 0 14 14"><circle cx="7" cy="7" r="6" stroke="#c8c8c8" stroke-width="1.1" fill="none"/><path d="M4 7 L6.3 9.3 L10 5" stroke="#c8c8c8" stroke-width="1.2" fill="none"/></svg>
<svg class="a" style="left:14px;top:919.5px;" width="15" height="15" viewBox="0 0 15 15"><path d="M0 2 L6.5 1 V7 H0Z M7.5 0.9 L15 0 V7 H7.5Z M0 8 H6.5 V14 L0 13Z M7.5 8 H15 V15 L7.5 14.1Z" fill="#fff"/></svg>
<svg class="a" style="left:55px;top:919px;" width="16" height="16" viewBox="0 0 16 16"><circle cx="9.5" cy="6.5" r="5" stroke="#fff" stroke-width="1.2" fill="none"/><path d="M6 10 L0.8 15.2" stroke="#fff" stroke-width="1.4"/></svg>
<svg class="a" style="left:98px;top:919.5px;" width="15" height="15" viewBox="0 0 15 15"><path d="M0.5 2 H10.5 M0.5 13 H10.5" stroke="#fff" stroke-width="1.1"/><rect x="1" y="4.5" width="9" height="6" stroke="#fff" stroke-width="1.1" fill="none"/><path d="M13 1 V3.5 M13 5.5 V9.5 M13 11.5 V14" stroke="#fff" stroke-width="1.3"/></svg>
<svg class="a" style="left:139px;top:918px;" width="20" height="18" viewBox="0 0 20 18"><path d="M0.5 1.5 H7 L9 3.5 H19.5 V17 H0.5Z" fill="#e8b828"/><rect x="0.5" y="5" width="19" height="12" fill="#f8d050"/><rect x="5" y="11.5" width="10" height="5.5" fill="#2a7ad0"/></svg>
<svg class="a" style="left:181px;top:916px;" width="22" height="22" viewBox="0 0 22 22"><circle cx="11" cy="11" r="10" fill="#1a8ad8"/><path d="M3 12 Q5 3 13 3 Q20 3.5 21 11 Q18 8 12 9.5 Q8 11 9.5 15 Q11 19 18 18 Q14 22 9 20.5 Q2 18 3 12Z" fill="#4ad070"/><path d="M8.5 13 Q9 9 13.5 9 Q17 9 18 12 Q14 11 12 13 Z" fill="#0c5aa8"/></svg>
<svg class="a" style="left:225px;top:916px;" width="21" height="21" viewBox="0 0 21 21"><path d="M5 4 Q5 1 10.5 1 Q16 1 16 4" stroke="#2a8ad8" stroke-width="1.6" fill="none"/><rect x="0.5" y="4" width="20" height="16.5" rx="2" fill="#f4f4f4"/><rect x="6" y="8" width="4" height="4" fill="#f25022"/><rect x="11" y="8" width="4" height="4" fill="#7fba00"/><rect x="6" y="13" width="4" height="4" fill="#00a4ef"/><rect x="11" y="13" width="4" height="4" fill="#ffb900"/></svg>
<svg class="a" style="left:268px;top:916px;" width="22" height="22" viewBox="0 0 22 22"><ellipse cx="11" cy="11" rx="10" ry="10.5" stroke="#d41a2e" stroke-width="2.6" fill="none"/><ellipse cx="11" cy="11" rx="4" ry="7.5" stroke="#d41a2e" stroke-width="2.4" fill="none"/></svg>
<svg class="a" style="left:310px;top:916px;" width="22" height="22" viewBox="0 0 22 22"><circle cx="11" cy="11" r="10.5" fill="#db4437"/><path d="M11 11 L20.1 5.75 A10.5 10.5 0 0 1 11 21.5Z" fill="#f4c20d"/><path d="M11 11 L11 21.5 A10.5 10.5 0 0 1 1.9 5.75Z" fill="#0f9d58"/><circle cx="11" cy="11" r="5" fill="#fff"/><circle cx="11" cy="11" r="3.8" fill="#4285f4"/></svg>
<svg class="a" style="left:353px;top:916px;" width="22" height="22" viewBox="0 0 22 22"><circle cx="11" cy="11" r="10.5" fill="#f2401f"/><text x="11" y="17" text-anchor="middle" font-family="Liberation Sans" font-weight="bold" font-size="15" fill="#fff">Я</text></svg>
<div class="a" style="left:386px;top:910px;width:42px;height:34px;background:#333333;"></div>
<div class="a" style="left:386px;top:942px;width:42px;height:2px;background:#9cc8f0;"></div>
<div class="a" style="left:432px;top:942px;width:36px;height:2px;background:#7aa0c8;"></div>
<div class="a" style="left:475px;top:942px;width:36px;height:2px;background:#7aa0c8;"></div>
<div class="a" style="left:139px;top:942px;width:20px;height:0px;"></div>
<div class="a" style="left:128px;top:942px;width:42px;height:2px;background:#7aa0c8;"></div>
<svg class="a" style="left:397px;top:917px;" width="20" height="20" viewBox="0 0 20 20"><g transform="scale(1.0)"><path d="M10 0.5 L18.5 5.3 L18.5 14.7 L10 19.5 L1.5 14.7 L1.5 5.3Z" fill="#e8e8e8"/><path d="M10 4.5 L14.5 7 V12.5 L10 15 L5.5 12.5 V7Z" fill="#444"/><path d="M10 4.5 V9.5 L14.5 12 M10 9.5 L5.5 12" stroke="#e8e8e8" stroke-width="1.4" fill="none"/></g></svg>
<svg class="a" style="left:440px;top:917px;" width="21" height="20" viewBox="0 0 21 20"><rect x="7" y="1" width="13" height="18" fill="#fff"/><path d="M9 5 H18 M9 8 H18 M9 11 H18 M9 14 H18" stroke="#2b579a" stroke-width="1"/><rect x="0.5" y="3.5" width="12" height="13" fill="#2b579a"/><text x="6.5" y="13.5" text-anchor="middle" font-family="Liberation Sans" font-weight="bold" font-size="9" fill="#fff">W</text></svg>
<svg class="a" style="left:483px;top:917px;" width="20" height="20" viewBox="0 0 20 20"><g transform="scale(1.0)"><path d="M10 0.5 L18.5 5.3 L18.5 14.7 L10 19.5 L1.5 14.7 L1.5 5.3Z" fill="#d8d8d8"/><path d="M10 4.5 L14.5 7 V12.5 L10 15 L5.5 12.5 V7Z" fill="#555"/><path d="M10 4.5 V9.5 L14.5 12 M10 9.5 L5.5 12" stroke="#d8d8d8" stroke-width="1.4" fill="none"/></g></svg>
<svg class="a" style="left:1434px;top:923px;" width="13" height="8" viewBox="0 0 13 8"><path d="M0.8 7 L6.5 1.2 L12.2 7" stroke="#fff" stroke-width="1.2" fill="none"/></svg>
<svg class="a" style="left:1460px;top:920px;" width="17" height="15" viewBox="0 0 17 15"><path d="M1 5 H4 L8 1.5 V13.5 L4 10 H1Z" stroke="#fff" stroke-width="1.1" fill="none"/><path d="M10.5 5 Q12 7.5 10.5 10 M12.8 3 Q15.5 7.5 12.8 12 M15 1.2 Q18.5 7.5 15 13.8" stroke="#fff" stroke-width="1.1" fill="none"/></svg>
<svg class="a" style="left:1488px;top:920px;" width="16" height="15" viewBox="0 0 16 15"><rect x="3" y="1" width="12" height="9" stroke="#fff" stroke-width="1.1" fill="none"/><path d="M9 10 V13 M6 13.5 H12 M0.5 3 H3 M1.5 3 V13" stroke="#fff" stroke-width="1.1"/></svg>
<svg class="a" style="left:1520px;top:919px;" width="16" height="16" viewBox="0 0 16 16"><path d="M3 13 L12.5 2.5 Q14 1.5 14.5 3 L5 13.5 Z" stroke="#fff" stroke-width="1.1" fill="none"/><path d="M4.5 15 Q0.5 15 1.5 11 M11 9 Q14 9 12 12" stroke="#fff" stroke-width="1.1" fill="none"/></svg>
<div class="t" style="left:1551.4px;top:920.5px;height:14px;line-height:14px;font-size:10px;color:#fff;">РУС</div>
<div class="t" style="left:1593px;top:912.0px;height:14px;line-height:14px;font-size:10px;color:#fff;letter-spacing:-0.3px">14:40</div>
<div class="t" style="left:1581.8px;top:928.0px;height:14px;line-height:14px;font-size:10px;color:#fff;letter-spacing:-0.4px">06.05.2023</div>
<svg class="a" style="left:1644px;top:920px;" width="16" height="15" viewBox="0 0 16 15"><path d="M0.5 0.5 H15.5 V11 H6 L2.5 14.5 V11 H0.5Z" fill="#fff"/><path d="M3 3.5 H13 M3 6 H13 M3 8.5 H10" stroke="#1f1f20" stroke-width="1"/></svg>
</body></html>
